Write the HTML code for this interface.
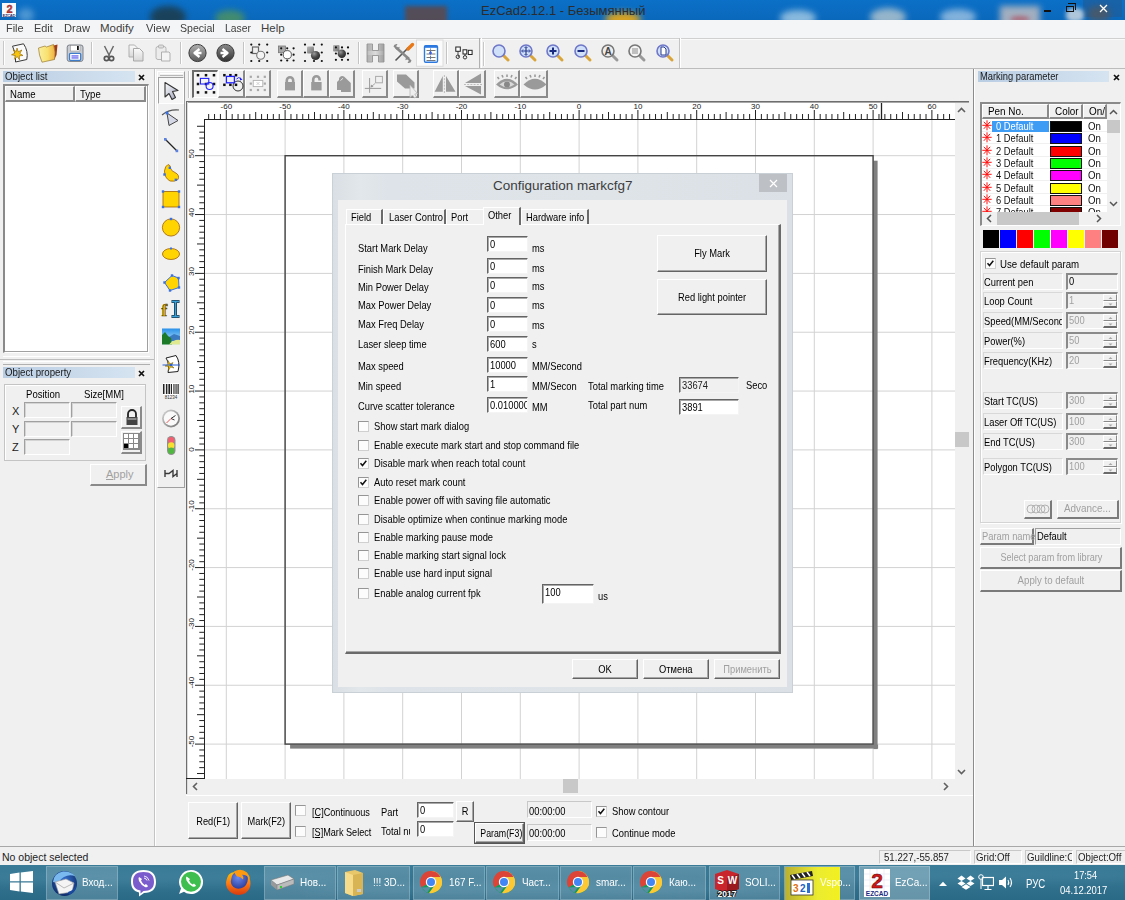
<!DOCTYPE html>
<html><head><meta charset="utf-8">
<style>
*{margin:0;padding:0;box-sizing:border-box}
html,body{width:1125px;height:900px;overflow:hidden;background:#f0f0f0;font-family:"Liberation Sans",sans-serif;font-size:11px;color:#000;position:relative}
.a{position:absolute}
.t{position:absolute;white-space:nowrap;line-height:1}
.cb{position:absolute;width:11px;height:11px;background:#fff;border:1px solid #8e8f8f;border-top-color:#6d6d6d;border-left-color:#6d6d6d}
.hdr{position:absolute;height:11px;background:linear-gradient(90deg,#b9cde3,#d6e4f1);font-size:11px;line-height:11px;color:#1a1a1a;padding-left:2px}
</style></head><body>
<div class="a" style="left:0;top:0;width:1125px;height:20px;background:linear-gradient(#0b70c7,#0a68bb);overflow:hidden">
<div class="a" style="left:150px;top:6px;width:36px;height:22px;border-radius:50%;background:#1d3b4a;filter:blur(3px);opacity:.85"></div>
<div class="a" style="left:215px;top:10px;width:30px;height:16px;border-radius:50%;background:#5a9a50;filter:blur(3px);opacity:.7"></div>
<div class="a" style="left:405px;top:6px;width:42px;height:20px;background:#5c4a4e;filter:blur(2px);opacity:.9"></div>
<div class="a" style="left:605px;top:12px;width:36px;height:14px;border-radius:50%;background:#d9a320;filter:blur(3px)"></div>
<div class="a" style="left:780px;top:10px;width:36px;height:16px;border-radius:50%;background:#a8cde6;filter:blur(3px);opacity:.8"></div>
<div class="a" style="left:870px;top:8px;width:36px;height:18px;border-radius:50%;background:#b8c8cf;filter:blur(3px);opacity:.8"></div>
<div class="a" style="left:940px;top:9px;width:36px;height:16px;border-radius:50%;background:#a0c4e4;filter:blur(3px);opacity:.8"></div>
<div class="a" style="left:1000px;top:6px;width:40px;height:20px;background:#c8c0c0;filter:blur(3px);opacity:.8"></div>
<div class="a" style="left:1083px;top:0;width:39px;height:17px;background:#1e5e9c;opacity:.75"></div>
<div class="a" style="left:1066px;top:8px;width:18px;height:14px;border-radius:40%;background:#d8dde2;filter:blur(2px);opacity:.8"></div>
<div class="a" style="left:1088px;top:6px;width:22px;height:16px;border-radius:40%;background:#505860;filter:blur(3px);opacity:.8"></div>
<div class="a" style="left:1010px;top:16px;width:20px;height:6px;border-radius:50%;background:#b04050;filter:blur(2px);opacity:.6"></div>
</div>
<div class="a" style="left:18px;top:8px;width:16px;height:14px;border-radius:50%;background:#7ab4e0;filter:blur(3px);opacity:.6"></div>
<svg class="a" style="left:2px;top:3px" width="14" height="14" viewBox="0 0 14 14"><rect width="14" height="14" fill="#f8f8fa"/><text x="7.5" y="9.5" font-size="11" font-weight="bold" text-anchor="middle" fill="#d83838" font-family="Liberation Sans" stroke="#602020" stroke-width=".3">2</text><rect x="0.5" y="10.2" width="13" height="3.4" fill="#fff"/><text x="7" y="13.6" font-size="4.2" font-weight="bold" text-anchor="middle" fill="#2a3070" font-family="Liberation Sans" textLength="13">EZCAD</text></svg>
<div class="t" style="left:481px;top:4px;font-size:13px;color:#2c2c2c">EzCad2.12.1 - Безымянный</div>
<div class="a" style="left:1044px;top:10px;width:7px;height:2px;background:#111"></div>
<div class="a" style="left:1066px;top:6px;width:8px;height:6px;border:1.5px solid #111"></div>
<div class="a" style="left:1068px;top:3px;width:8px;height:7px;border-top:1.5px solid #111;border-right:1.5px solid #111"></div>
<svg class="a" style="left:1099px;top:4px" width="9" height="9" viewBox="0 0 9 9"><path d="M1 1 L8 8 M8 1 L1 8" stroke="#fff" stroke-width="1.3"/></svg>
<div class="a" style="left:0;top:20px;width:1125px;height:19px;background:#f4f5f6;border-bottom:1px solid #d0d0d0"></div><div class="t" style="left:6px;top:23px;font-size:11.5px;color:#404040;transform:scaleX(0.95);transform-origin:0 0">File</div><div class="t" style="left:34px;top:23px;font-size:11.5px;color:#404040;transform:scaleX(0.95);transform-origin:0 0">Edit</div><div class="t" style="left:64px;top:23px;font-size:11.5px;color:#404040;transform:scaleX(0.97);transform-origin:0 0">Draw</div><div class="t" style="left:100px;top:23px;font-size:11.5px;color:#404040;transform:scaleX(1);transform-origin:0 0">Modify</div><div class="t" style="left:146px;top:23px;font-size:11.5px;color:#404040;transform:scaleX(0.97);transform-origin:0 0">View</div><div class="t" style="left:180px;top:23px;font-size:11.5px;color:#404040;transform:scaleX(0.92);transform-origin:0 0">Special</div><div class="t" style="left:225px;top:23px;font-size:11.5px;color:#404040;transform:scaleX(0.9);transform-origin:0 0">Laser</div><div class="t" style="left:261px;top:23px;font-size:11.5px;color:#404040;transform:scaleX(1);transform-origin:0 0">Help</div><div class="a" style="left:0;top:39px;width:1125px;height:30px;background:#f0f0f0;border-top:1px solid #fafafa;border-bottom:1px solid #bcbcbc"></div><div class="a" style="left:3px;top:41px;width:2px;height:24px;border-left:1px solid #c8c8c8;border-right:1px solid #fff"></div>
<div class="a" style="left:91px;top:42px;width:2px;height:22px;border-left:1px solid #c4c4c4;border-right:1px solid #fff"></div>
<div class="a" style="left:180px;top:42px;width:2px;height:22px;border-left:1px solid #c4c4c4;border-right:1px solid #fff"></div>
<div class="a" style="left:243px;top:42px;width:2px;height:22px;border-left:1px solid #c4c4c4;border-right:1px solid #fff"></div>
<div class="a" style="left:358px;top:42px;width:2px;height:22px;border-left:1px solid #c4c4c4;border-right:1px solid #fff"></div>
<div class="a" style="left:446px;top:42px;width:2px;height:22px;border-left:1px solid #c4c4c4;border-right:1px solid #fff"></div>
<div class="a" style="left:479px;top:38px;width:3px;height:30px;border-left:1px solid #b0b0b0;border-right:1px solid #fff"></div>
<div class="a" style="left:483px;top:42px;width:2px;height:24px;border-left:1px solid #c8c8c8;border-right:1px solid #fff"></div>
<div class="a" style="left:679px;top:38px;width:2px;height:30px;border-left:1px solid #c4c4c4;border-right:1px solid #fff"></div>
<svg class="a" style="left:9px;top:43px" width="20" height="20" viewBox="0 0 20 20">
<path d="M3.5 3.2 L14.5 0.8 Q19.5 8 17.8 16.5 L6.5 19 Q8 11 3.5 3.2Z" fill="#fafafa" stroke="#3a3a3a" stroke-width="1"/>
<path d="M8 5 L9.3 8.8 L12.8 7 L10.8 10.5 L14 12.5 L10.3 12.8 L10.5 16.8 L8.2 13.6 L5.5 16.3 L6.2 12.6 L2.5 11.8 L6 10 L4.2 6.8 L7.3 8.5Z" fill="#f6c40e" stroke="#8a6000" stroke-width=".6"/></svg>
<svg class="a" style="left:37px;top:43px" width="22" height="20" viewBox="0 0 22 20">
<defs><linearGradient id="fg" x1="0" x2="1"><stop offset="0" stop-color="#fbf0a0"/><stop offset=".55" stop-color="#f8e070"/><stop offset="1" stop-color="#f0b040"/></linearGradient></defs>
<path d="M15 3 L20.5 1.5 L19.5 12 L17 17Z" fill="#a33a16"/>
<path d="M1.5 5 L8 3 L9.5 4 L16.5 1.5 Q19 9 17.5 16.5 L5 19.2 Q1.8 12 1.5 5Z" fill="url(#fg)" stroke="#9a7a30" stroke-width=".7"/></svg>
<svg class="a" style="left:66px;top:44px" width="18" height="18" viewBox="0 0 18 18">
<rect x="1.2" y="1" width="15.8" height="16.4" rx="2.2" fill="#c9cdd3" stroke="#7a8088" stroke-width="1"/>
<rect x="4.5" y="1.5" width="9.5" height="5.5" fill="#fff" stroke="#888" stroke-width=".5"/><rect x="11" y="2" width="1.8" height="4" fill="#111"/>
<rect x="3.5" y="9.3" width="11.2" height="7" rx="1" fill="#fff" stroke="#3c7cc8" stroke-width="1.3"/><rect x="5.5" y="11.4" width="7" height="1.1" fill="#4a4aee"/><rect x="5.5" y="13.4" width="7" height="1.1" fill="#4a4aee"/></svg>
<svg class="a" style="left:100px;top:43px" width="18" height="20" viewBox="0 0 18 20">
<path d="M4.5 3 L9.5 13 M13.5 3 L8.5 13" stroke="#6a6a6a" stroke-width="1.5"/>
<circle cx="6.5" cy="15.5" r="2.2" fill="none" stroke="#555" stroke-width="1.7"/><circle cx="11.5" cy="15.5" r="2.2" fill="none" stroke="#555" stroke-width="1.7"/></svg>
<svg class="a" style="left:127px;top:43px" width="18" height="20" viewBox="0 0 18 20">
<defs><linearGradient id="cg" x1="0" y1="0" x2="0" y2="1"><stop offset="0" stop-color="#fafafa"/><stop offset="1" stop-color="#d8d8d8"/></linearGradient></defs>
<path d="M2 2 H7.5 L10 4.5 V14 H2Z" fill="url(#cg)" stroke="#a8a8a8" stroke-width=".9"/><path d="M6.5 5.5 H12.5 L16 9 V18 H6.5Z" fill="url(#cg)" stroke="#a0a0a0" stroke-width=".9"/></svg>
<svg class="a" style="left:154px;top:43px" width="18" height="20" viewBox="0 0 18 20">
<rect x="2" y="3.5" width="10" height="13" rx="2" fill="#ececec" stroke="#b0b0b0" stroke-width=".9"/><rect x="4.5" y="2" width="5" height="3" rx="1" fill="#ddd" stroke="#a8a8a8" stroke-width=".8"/><path d="M7.5 9 H15 L16 10 V18 H7.5Z" fill="#f4f4f4" stroke="#a8a8a8" stroke-width=".9"/></svg>
<svg class="a" style="left:187px;top:43px" width="20" height="20" viewBox="0 0 20 20">
<defs><linearGradient id="bg197" x1="0" y1="0" x2="0" y2="1"><stop offset="0" stop-color="#b0b0b0"/><stop offset="1" stop-color="#5a5a5a"/></linearGradient></defs>
<circle cx="10.5" cy="10" r="8.6" fill="url(#bg197)" stroke="#3a3a3a" stroke-width="1"/>
<path d="M12.5 6 L7.5 10 L12.5 14 M7.5 10 H14.5" fill="none" stroke="#fff" stroke-width="2.3" stroke-linejoin="round"/></svg>
<svg class="a" style="left:215px;top:43px" width="20" height="20" viewBox="0 0 20 20">
<defs><linearGradient id="bg225" x1="0" y1="0" x2="0" y2="1"><stop offset="0" stop-color="#8a8a8a"/><stop offset="1" stop-color="#333"/></linearGradient></defs>
<circle cx="10.5" cy="10" r="8.6" fill="url(#bg225)" stroke="#3a3a3a" stroke-width="1"/>
<path d="M7.5 6 L12.5 10 L7.5 14 M12.5 10 H5.5" fill="none" stroke="#fff" stroke-width="2.3" stroke-linejoin="round"/></svg>
<svg class="a" style="left:245px;top:40px" width="110" height="26" viewBox="245 40 110 26"><defs><radialGradient id="ball" cx=".35" cy=".3" r=".8"><stop offset="0" stop-color="#9a9a9a"/><stop offset=".5" stop-color="#4a4a4a"/><stop offset="1" stop-color="#222"/></radialGradient><linearGradient id="sq" x1="0" y1="0" x2="1" y2="1"><stop offset="0" stop-color="#b8b8b8"/><stop offset="1" stop-color="#707070"/></linearGradient></defs><rect x="252.5" y="47" width="6" height="6.5" fill="none" stroke="#666" stroke-width="1.2"/><circle cx="260.7" cy="55.3" r="4" fill="#f4f4f4" stroke="#777" stroke-width="1.1"/><circle cx="251.3" cy="44.6" r="1.1" fill="#111"/><circle cx="259.2" cy="44.6" r="1.1" fill="#111"/><circle cx="267.2" cy="44.6" r="1.1" fill="#111"/><circle cx="251.3" cy="52.5" r="1.1" fill="#111"/><circle cx="267.2" cy="52.5" r="1.1" fill="#111"/><circle cx="251.3" cy="61" r="1.1" fill="#111"/><circle cx="259.2" cy="61" r="1.1" fill="#111"/><circle cx="267.2" cy="61" r="1.1" fill="#111"/><rect x="278.5" y="46" width="7" height="6.7" fill="#a8a8a8" stroke="#777" stroke-width=".8"/><circle cx="287.3" cy="54.7" r="4.1" fill="#fff" stroke="#444" stroke-width=".9"/><circle cx="281.2" cy="48.3" r="1.1" fill="#111"/><circle cx="287.2" cy="48.3" r="1.1" fill="#111"/><circle cx="293.6" cy="48.3" r="1.1" fill="#111"/><circle cx="281.2" cy="54.7" r="1.1" fill="#111"/><circle cx="293.6" cy="54.7" r="1.1" fill="#111"/><circle cx="281.2" cy="60.5" r="1.1" fill="#111"/><circle cx="287.2" cy="60.5" r="1.1" fill="#111"/><circle cx="293.6" cy="60.5" r="1.1" fill="#111"/><rect x="307" y="46.5" width="7" height="7" rx="1" fill="url(#sq)"/><circle cx="315.5" cy="55.5" r="4.6" fill="url(#ball)"/><circle cx="305" cy="44.6" r="1.1" fill="#111"/><circle cx="314" cy="44.6" r="1.1" fill="#111"/><circle cx="321.8" cy="44.6" r="1.1" fill="#111"/><circle cx="305" cy="52.5" r="1.1" fill="#111"/><circle cx="321.8" cy="52.5" r="1.1" fill="#111"/><circle cx="305" cy="61" r="1.1" fill="#111"/><circle cx="314" cy="61" r="1.1" fill="#111"/><circle cx="321.8" cy="61" r="1.1" fill="#111"/><rect x="333" y="45" width="6.5" height="6.5" rx="1" fill="url(#sq)"/><circle cx="341.8" cy="53.8" r="4.2" fill="url(#ball)"/><circle cx="342" cy="47.4" r="1.1" fill="#111"/><circle cx="348" cy="47.4" r="1.1" fill="#111"/><circle cx="335.9" cy="53.5" r="1.1" fill="#111"/><circle cx="348" cy="53.5" r="1.1" fill="#111"/><circle cx="335.9" cy="59.8" r="1.1" fill="#111"/><circle cx="342" cy="59.8" r="1.1" fill="#111"/><circle cx="348" cy="59.8" r="1.1" fill="#111"/><circle cx="335.9" cy="47.4" r="1.1" fill="#111"/></svg>
<svg class="a" style="left:360px;top:38px" width="120" height="30" viewBox="360 38 120 30">
<defs><linearGradient id="hg" x1="0" x2="1"><stop offset="0" stop-color="#bdbdbd"/><stop offset=".5" stop-color="#dcdcdc"/><stop offset="1" stop-color="#a8a8a8"/></linearGradient></defs>
<path d="M367 44 H372.5 V50.5 H378.5 V44 H384 V62 H378.5 V55.5 H372.5 V62 H367Z" fill="url(#hg)" stroke="#8a8a8a" stroke-width=".8"/><path d="M367 46 H372.5 M378.5 46 H384" stroke="#8a8a8a" stroke-width=".5"/><path d="M367 48 H372.5 M378.5 48 H384" stroke="#8a8a8a" stroke-width=".5"/><path d="M367 50 H372.5 M378.5 50 H384" stroke="#8a8a8a" stroke-width=".5"/><path d="M367 56 H372.5 M378.5 56 H384" stroke="#8a8a8a" stroke-width=".5"/><path d="M367 58 H372.5 M378.5 58 H384" stroke="#8a8a8a" stroke-width=".5"/><path d="M367 60 H372.5 M378.5 60 H384" stroke="#8a8a8a" stroke-width=".5"/>
<path d="M395.5 60.5 L409 47" stroke="#555" stroke-width="1.6"/><path d="M408 49 L412.5 44.5" stroke="#e87818" stroke-width="3.4" stroke-linecap="round"/>
<path d="M396 47.5 L409 59" stroke="#888" stroke-width="2.6"/><path d="M393.5 46.5 Q394 43.5 397.5 44 L396.2 46.2 L397.5 47.8 L399.5 46.8 Q400 50 396.5 49.5Z" fill="#888"/><path d="M411.5 60.5 Q411 63.5 407.5 63 L408.8 60.8 L407.5 59.2 L405.5 60.2 Q405 57 408.5 57.5Z" fill="#888"/>
<rect x="416.5" y="40" width="26.5" height="26.3" fill="#fbfbfb" stroke="#dcdcdc" stroke-width="1"/>
<rect x="424.5" y="45.8" width="13" height="16.4" rx="1.2" fill="#fff" stroke="#2a78e0" stroke-width="1.4"/><rect x="424.5" y="45.8" width="13" height="2" fill="#2a78e0"/>
<path d="M426.5 50.5 H435.5 M426.5 54 H435.5 M426.5 57.5 H435.5 M426.5 60.5 H435.5" stroke="#555" stroke-width=".8"/>
<path d="M430.5 48.5 V61" stroke="#3a70e0" stroke-width="1" stroke-dasharray="1.2 1.2"/><circle cx="430.5" cy="53" r="1.4" fill="#3a60e0"/>
<rect x="455.8" y="47" width="4.5" height="4.3" fill="#fff" stroke="#222" stroke-width="1"/><rect x="463" y="49.8" width="3.8" height="4.2" fill="#fff" stroke="#222" stroke-width="1"/><rect x="468.3" y="50.3" width="3.8" height="4.2" fill="#fff" stroke="#222" stroke-width="1"/>
<circle cx="457.8" cy="56.8" r="1.7" fill="none" stroke="#222" stroke-width=".9"/><circle cx="465" cy="57.3" r="1.7" fill="none" stroke="#222" stroke-width=".9"/><path d="M458 51.3 V55 M465 54 V55.6 M457.8 56.8 L459.5 55.5" stroke="#222" stroke-width=".8"/></svg>
<svg class="a" style="left:491px;top:43px" width="20" height="20" viewBox="0 0 20 20">
<path d="M11 11 L17 17" stroke="#d9a53a" stroke-width="3" stroke-linecap="round"/>
<circle cx="8" cy="8" r="6" fill="#cfe0f8" stroke="#6f78c8" stroke-width="1.6"/></svg>
<svg class="a" style="left:518px;top:43px" width="20" height="20" viewBox="0 0 20 20">
<path d="M11 11 L17 17" stroke="#d9a53a" stroke-width="3" stroke-linecap="round"/>
<circle cx="8" cy="8" r="6" fill="#cfe0f8" stroke="#6f78c8" stroke-width="1.6"/><path d="M8 4 V12 M4 8 H12" stroke="#2a3a90" stroke-width="1.2"/><path d="M6.5 5 L8 3.5 L9.5 5 M6.5 11 L8 12.5 L9.5 11 M5 6.5 L3.5 8 L5 9.5 M11 6.5 L12.5 8 L11 9.5" fill="none" stroke="#2a3a90" stroke-width=".9"/></svg>
<svg class="a" style="left:545px;top:43px" width="20" height="20" viewBox="0 0 20 20">
<path d="M11 11 L17 17" stroke="#d9a53a" stroke-width="3" stroke-linecap="round"/>
<circle cx="8" cy="8" r="6" fill="#cfe0f8" stroke="#6f78c8" stroke-width="1.6"/><path d="M8 4.5 V11.5 M4.5 8 H11.5" stroke="#1a2a80" stroke-width="2"/></svg>
<svg class="a" style="left:573px;top:43px" width="20" height="20" viewBox="0 0 20 20">
<path d="M11 11 L17 17" stroke="#d9a53a" stroke-width="3" stroke-linecap="round"/>
<circle cx="8" cy="8" r="6" fill="#cfe0f8" stroke="#6f78c8" stroke-width="1.6"/><path d="M4.5 8 H11.5" stroke="#1a2a80" stroke-width="2"/></svg>
<svg class="a" style="left:600px;top:43px" width="20" height="20" viewBox="0 0 20 20">
<path d="M11 11 L17 17" stroke="#999" stroke-width="3" stroke-linecap="round"/>
<circle cx="8" cy="8" r="6" fill="#eee" stroke="#777" stroke-width="1.6"/><text x="8" y="11.5" font-size="10" font-weight="bold" text-anchor="middle" fill="#444" font-family="Liberation Sans">A</text></svg>
<svg class="a" style="left:627px;top:43px" width="20" height="20" viewBox="0 0 20 20">
<path d="M11 11 L17 17" stroke="#999" stroke-width="3" stroke-linecap="round"/>
<circle cx="8" cy="8" r="6" fill="#f4f4f4" stroke="#777" stroke-width="1.6"/><path d="M5 6 H11 M5 8 H11 M5 10 H11 M6 5 V11 M8 5 V11 M10 5 V11" stroke="#999" stroke-width=".7"/></svg>
<svg class="a" style="left:655px;top:43px" width="20" height="20" viewBox="0 0 20 20">
<path d="M11 11 L17 17" stroke="#d9a53a" stroke-width="3" stroke-linecap="round"/>
<circle cx="8" cy="8" r="6" fill="#cfe0f8" stroke="#6f78c8" stroke-width="1.6"/><path d="M6 4 H9 L11 6 V12 H6Z" fill="#fff" stroke="#2a3a90" stroke-width="1"/></svg><div class="hdr" style="left:3px;top:71px;width:132px"><span style="display:inline-block;transform:scaleX(.88);transform-origin:0 0">Object list</span></div>
<svg class="a" style="left:138px;top:74px" width="7" height="7" viewBox="0 0 7 7"><path d="M1 1 L6 6 M6 1 L1 6" stroke="#111" stroke-width="1.7"/></svg>
<div class="a" style="left:3px;top:84px;width:146px;height:269px;background:#fff;border-style:solid;border-width:2px 1px 1px 2px;border-color:#8a8a8a #fff #fff #8a8a8a;box-shadow:inset -1px -1px 0 #a0a0a0"></div>
<div class="a" style="left:5px;top:86px;width:70px;height:16px;background:#f0f0f0;border-style:solid;border-width:1px 2px 2px 1px;border-color:#fff #8a8a8a #8a8a8a #fff"></div>
<div class="a" style="left:75px;top:86px;width:71px;height:16px;background:#f0f0f0;border-style:solid;border-width:1px 2px 2px 1px;border-color:#fff #8a8a8a #8a8a8a #fff"></div>
<div class="t" style="left:10px;top:89px;font-size:11px;transform:scaleX(.87);transform-origin:0 0">Name</div>
<div class="t" style="left:80px;top:89px;font-size:11px;transform:scaleX(.87);transform-origin:0 0">Type</div>
<div class="a" style="left:3px;top:356px;width:147px;height:1px;background:#fff"></div><div class="a" style="left:0;top:359px;width:154px;height:1px;background:#bdbdbd"></div>
<div class="a" style="left:3px;top:361px;width:147px;height:1px;background:#fff"></div><div class="a" style="left:3px;top:364px;width:147px;height:1px;background:#b0b0b0"></div>
<div class="a" style="left:154px;top:69px;width:2px;height:777px;border-left:1px solid #c4c4c4;border-right:1px solid #fff"></div>
<div class="hdr" style="left:3px;top:367px;width:132px"><span style="display:inline-block;transform:scaleX(.88);transform-origin:0 0">Object property</span></div>
<svg class="a" style="left:138px;top:370px" width="7" height="7" viewBox="0 0 7 7"><path d="M1 1 L6 6 M6 1 L1 6" stroke="#111" stroke-width="1.7"/></svg>
<div class="a" style="left:4px;top:384px;width:142px;height:77px;border:1px solid #c4c4c4;box-shadow:1px 1px 0 #fff inset"></div>
<div class="t" style="left:26px;top:389px;font-size:11px;transform:scaleX(.87);transform-origin:0 0">Position</div>
<div class="t" style="left:84px;top:389px;font-size:11px;transform:scaleX(.87);transform-origin:0 0">Size[MM]</div>
<div class="t" style="left:12px;top:406px;font-size:11px;color:#222">X</div>
<div class="t" style="left:12px;top:424px;font-size:11px;color:#222">Y</div>
<div class="t" style="left:12px;top:442px;font-size:11px;color:#222">Z</div>
<div class="a" style="left:24px;top:402px;width:46px;height:16px;background:#f0f0f0;border-style:solid;border-width:1px;border-color:#a0a0a0 #fff #fff #a0a0a0;box-shadow:inset 1px 1px 0 #d4d4d4"></div>
<div class="a" style="left:24px;top:421px;width:46px;height:16px;background:#f0f0f0;border-style:solid;border-width:1px;border-color:#a0a0a0 #fff #fff #a0a0a0;box-shadow:inset 1px 1px 0 #d4d4d4"></div>
<div class="a" style="left:24px;top:439px;width:46px;height:16px;background:#f0f0f0;border-style:solid;border-width:1px;border-color:#a0a0a0 #fff #fff #a0a0a0;box-shadow:inset 1px 1px 0 #d4d4d4"></div>
<div class="a" style="left:71px;top:402px;width:46px;height:16px;background:#f0f0f0;border-style:solid;border-width:1px;border-color:#a0a0a0 #fff #fff #a0a0a0;box-shadow:inset 1px 1px 0 #d4d4d4"></div>
<div class="a" style="left:71px;top:421px;width:46px;height:16px;background:#f0f0f0;border-style:solid;border-width:1px;border-color:#a0a0a0 #fff #fff #a0a0a0;box-shadow:inset 1px 1px 0 #d4d4d4"></div>
<div class="a" style="left:121px;top:406px;width:21px;height:23px;background:#f0f0f0;border-style:solid;border-width:1px 2px 2px 1px;border-color:#fff #8a8a8a #8a8a8a #fff;"></div>
<svg class="a" style="left:124px;top:409px" width="16" height="17" viewBox="0 0 16 17"><path d="M4 8 V5 A4 4 0 0 1 12 5 V8" fill="none" stroke="#222" stroke-width="1.8"/><rect x="2.5" y="8" width="11" height="8" fill="#444"/><rect x="3.5" y="9" width="9" height="2" fill="#888"/></svg>
<div class="a" style="left:121px;top:431px;width:21px;height:23px;background:#f0f0f0;border-style:solid;border-width:1px 2px 2px 1px;border-color:#fff #8a8a8a #8a8a8a #fff;"></div>
<svg class="a" style="left:123px;top:433px" width="17" height="17" viewBox="0 0 17 17"><rect x="0" y="0" width="17" height="17" fill="#888"/><rect x="1" y="1" width="4" height="4" fill="#fff"/><rect x="1" y="6" width="4" height="4" fill="#fff"/><rect x="1" y="11" width="4" height="4" fill="#000"/><rect x="6" y="1" width="4" height="4" fill="#fff"/><rect x="6" y="6" width="4" height="4" fill="#fff"/><rect x="6" y="11" width="4" height="4" fill="#fff"/><rect x="11" y="1" width="4" height="4" fill="#fff"/><rect x="11" y="6" width="4" height="4" fill="#fff"/><rect x="11" y="11" width="4" height="4" fill="#fff"/></svg>
<div class="a" style="left:90px;top:464px;width:57px;height:22px;background:#f0f0f0;border-style:solid;border-width:1px 2px 2px 1px;border-color:#fff #8a8a8a #8a8a8a #fff;"></div>
<div class="t" style="left:106px;top:469px;font-size:11px;color:#a0a0a0"><u>A</u>pply</div>
<div class="a" style="left:157px;top:71px;width:28px;height:417px;border-style:solid;border-width:1px;border-color:#fff #a0a0a0 #a0a0a0 #fff"></div>
<div class="a" style="left:160px;top:73px;width:23px;height:3px;border-top:1px solid #fff;border-bottom:1px solid #b8b8b8"></div>
<div class="a" style="left:158px;top:77px;width:26px;height:27px;background:#f6f6f6;border-style:solid;border-width:1px;border-color:#a0a0a0 #fff #fff #a0a0a0"></div>
<svg class="a" style="left:161px;top:80px" width="20" height="20" viewBox="0 0 20 20"><defs><linearGradient id="ag" x1="0" y1="0" x2="1" y2="1"><stop offset="0" stop-color="#fff"/><stop offset="1" stop-color="#9aa0b8"/></linearGradient></defs><path d="M4 2.5 L17 10.5 L11.5 11.5 L14.5 17.5 L11 19.5 L8 13.5 L4 17Z" fill="url(#ag)" stroke="#333" stroke-width="1.1" stroke-linejoin="round"/></svg>
<svg class="a" style="left:161px;top:108px" width="20" height="20" viewBox="0 0 20 20"><path d="M1 7 Q8 1 18 2" fill="none" stroke="#555" stroke-width="1.1"/><path d="M6 5 L17 12.5 L8 17.5Z" fill="#d4d8e6" stroke="#444" stroke-width="1"/><rect x="4.6" y="3.6" width="2.8" height="2.8" fill="#3a70e0"/></svg>
<svg class="a" style="left:161px;top:135px" width="20" height="20" viewBox="0 0 20 20"><path d="M4.5 4.5 L15.5 15.5" stroke="#222" stroke-width="1.2"/><rect x="3" y="3" width="2.6" height="2.6" fill="#5a80e0"/><rect x="14.6" y="14.6" width="2.6" height="2.6" fill="#5a80e0"/></svg>
<svg class="a" style="left:161px;top:162px" width="20" height="20" viewBox="0 0 20 20"><path d="M7 2.5 Q4 4 3.5 9 Q3.5 16 9 19 Q14 20 17 17.5 Q19 13 14 10.5 Q10 9 9.5 6 Q9.5 3 7 2.5Z" fill="#ffd400" stroke="#a06000" stroke-width=".8"/><rect x="7.6" y="4.6" width="2.4" height="2.4" fill="#3a70e0"/><rect x="2.3" y="11.3" width="2.4" height="2.4" fill="#3a70e0"/><rect x="13.6" y="16.6" width="2.4" height="2.4" fill="#3a70e0"/></svg>
<svg class="a" style="left:161px;top:189px" width="20" height="20" viewBox="0 0 20 20"><rect x="2" y="2.5" width="16" height="15.5" fill="#ffd400" stroke="#a06000" stroke-width=".8"/><rect x=".8" y="1.3" width="2.4" height="2.4" fill="#3a70e0"/><rect x="16.8" y="1.3" width="2.4" height="2.4" fill="#3a70e0"/><rect x=".8" y="16.8" width="2.4" height="2.4" fill="#3a70e0"/><rect x="16.8" y="16.8" width="2.4" height="2.4" fill="#3a70e0"/></svg>
<svg class="a" style="left:161px;top:217px" width="20" height="20" viewBox="0 0 20 20"><circle cx="10" cy="10.5" r="8.6" fill="#ffd400" stroke="#a06000" stroke-width=".8"/><rect x="8.8" y=".8" width="2.4" height="2.4" fill="#3a70e0"/></svg>
<svg class="a" style="left:161px;top:244px" width="20" height="20" viewBox="0 0 20 20"><ellipse cx="10" cy="10" rx="8.5" ry="5.5" fill="#ffd400" stroke="#a06000" stroke-width=".8"/><rect x="9" y="3.5" width="2" height="2" fill="#3a70e0"/></svg>
<svg class="a" style="left:161px;top:272px" width="20" height="20" viewBox="0 0 20 20"><path d="M3.5 10.5 L11 3.5 L17.5 6 L18 15.5 L9 18.5Z" fill="#ffd400" stroke="#3a70e0" stroke-width="1"/><g fill="#3a70e0"><rect x="2.3" y="9.3" width="2.4" height="2.4"/><rect x="9.8" y="2.3" width="2.4" height="2.4"/><rect x="16.3" y="4.8" width="2.4" height="2.4"/><rect x="16.8" y="14.3" width="2.4" height="2.4"/><rect x="7.8" y="17.3" width="2.4" height="2.4"/></g></svg>
<svg class="a" style="left:161px;top:299px" width="20" height="20" viewBox="0 0 20 20"><text x="0.5" y="17" font-size="17" font-weight="bold" fill="#f0c000" font-family="Liberation Serif" stroke="#504000" stroke-width=".7">f</text><path d="M10.5 2.5 H18.5 M14.5 2.5 V17.5 M10.5 17.5 H18.5" stroke="#1a3a50" stroke-width="3"/><path d="M11 2.5 H18 M14.5 3 V17 M11 17.5 H18" stroke="#3aa0d8" stroke-width="1.4"/></svg>
<svg class="a" style="left:161px;top:326px" width="20" height="20" viewBox="0 0 20 20"><defs><linearGradient id="sky" x1="0" y1="0" x2="0" y2="1"><stop offset="0" stop-color="#2a90e8"/><stop offset="1" stop-color="#c8f0ff"/></linearGradient></defs><rect x="1" y="2.5" width="18" height="16" fill="url(#sky)"/><path d="M8 11 L13 8 L19 10 V15 H8Z" fill="#3a7ac0"/><path d="M1 9 L4 6 L7 10 L10 12 L11 18.5 H1Z" fill="#1a7a28"/><path d="M8 18.5 Q13 13 19 14 V18.5Z" fill="#e0e890"/></svg>
<svg class="a" style="left:161px;top:354px" width="20" height="20" viewBox="0 0 20 20"><path d="M5 4 L15 1.5 Q19.5 8 17 17.5 L7 18.5 Q9 10 5 4Z" fill="#fff" stroke="#222" stroke-width="1"/><path d="M7 6.5 L9 10 L12 8.5 L10.5 11.5 L13 14 L9.5 13 L7.5 16.5 L7.5 12.5 L4 12 L7 10.5Z" fill="#f0c000" stroke="#705000" stroke-width=".5"/><path d="M1.5 11 H19" stroke="#2a60d0" stroke-width="1"/><rect x="8.8" y="9.8" width="2.4" height="2.4" fill="#2a60d0"/></svg>
<svg class="a" style="left:161px;top:381px" width="20" height="20" viewBox="0 0 20 20"><rect x="2" y="2" width="16" height="12" fill="#fff"/><rect x="2" y="3" width="1" height="10" fill="#222"/><rect x="3.5" y="3" width="0.6" height="10" fill="#222"/><rect x="5" y="3" width="1.4" height="10" fill="#222"/><rect x="7" y="3" width="0.6" height="10" fill="#222"/><rect x="8" y="3" width="1.2" height="10" fill="#222"/><rect x="10" y="3" width="1" height="10" fill="#222"/><rect x="12" y="3" width="0.6" height="10" fill="#222"/><rect x="13.5" y="3" width="1" height="10" fill="#222"/><rect x="15" y="3" width="0.6" height="10" fill="#222"/><rect x="16.5" y="3" width="1.2" height="10" fill="#222"/><text x="10" y="18" font-size="4.5" text-anchor="middle" fill="#333" font-family="Liberation Sans">81234</text></svg>
<svg class="a" style="left:161px;top:408px" width="20" height="20" viewBox="0 0 20 20"><defs><linearGradient id="clk" x1="0" y1="0" x2="1" y2="1"><stop offset="0" stop-color="#d8d8d8"/><stop offset="1" stop-color="#707070"/></linearGradient></defs><circle cx="10" cy="10.5" r="9" fill="url(#clk)"/><circle cx="10" cy="10.5" r="7.2" fill="#fafafa"/><path d="M10 10.5 L14.5 7.5 M10 10.5 L13.5 12" stroke="#333" stroke-width="1"/><path d="M10 10.5 L5.5 15" stroke="#e03030" stroke-width=".8"/></svg>
<svg class="a" style="left:161px;top:435px" width="20" height="20" viewBox="0 0 20 20"><rect x="6" y="1" width="8.5" height="19" rx="4.2" fill="#909090"/><circle cx="10.2" cy="5.3" r="3.2" fill="#f06070"/><circle cx="10.2" cy="10.5" r="3.2" fill="#f8e030"/><circle cx="10.2" cy="15.7" r="3.2" fill="#50b840"/></svg>
<svg class="a" style="left:161px;top:463px" width="20" height="20" viewBox="0 0 20 20"><path d="M4 7 V14 M4 10.5 H8 L12 7.5 V13.5 L16 10.5 M16 7 V14" fill="none" stroke="#3a3a3a" stroke-width="1.4"/></svg>
<div class="a" style="left:188px;top:71px;width:2px;height:27px;border-left:1px solid #c4c4c4;border-right:1px solid #fff"></div>
<div class="a" style="left:192px;top:70px;width:26px;height:28px;background:#f4f4f4;border-style:solid;border-width:2px 1px 1px 2px;border-color:#6a6a6a #fff #fff #6a6a6a;"></div>
<div class="a" style="left:218px;top:70px;width:27px;height:28px;background:#f0f0f0;border-style:solid;border-width:1px 2px 2px 1px;border-color:#fff #8a8a8a #8a8a8a #fff;"></div>
<div class="a" style="left:245px;top:70px;width:26px;height:28px;background:#f0f0f0;border-style:solid;border-width:1px 2px 2px 1px;border-color:#fff #8a8a8a #8a8a8a #fff;"></div>
<div class="a" style="left:277px;top:70px;width:26px;height:28px;background:#f0f0f0;border-style:solid;border-width:1px 2px 2px 1px;border-color:#fff #8a8a8a #8a8a8a #fff;"></div>
<div class="a" style="left:303px;top:70px;width:26px;height:28px;background:#f0f0f0;border-style:solid;border-width:1px 2px 2px 1px;border-color:#fff #8a8a8a #8a8a8a #fff;"></div>
<div class="a" style="left:329px;top:70px;width:26px;height:28px;background:#f0f0f0;border-style:solid;border-width:1px 2px 2px 1px;border-color:#fff #8a8a8a #8a8a8a #fff;"></div>
<div class="a" style="left:362px;top:70px;width:26px;height:28px;background:#f0f0f0;border-style:solid;border-width:1px 2px 2px 1px;border-color:#fff #8a8a8a #8a8a8a #fff;"></div>
<div class="a" style="left:393px;top:70px;width:26px;height:28px;background:#f0f0f0;border-style:solid;border-width:1px 2px 2px 1px;border-color:#fff #8a8a8a #8a8a8a #fff;"></div>
<div class="a" style="left:433px;top:70px;width:26px;height:28px;background:#f0f0f0;border-style:solid;border-width:1px 2px 2px 1px;border-color:#fff #8a8a8a #8a8a8a #fff;"></div>
<div class="a" style="left:459px;top:70px;width:27px;height:28px;background:#f0f0f0;border-style:solid;border-width:1px 2px 2px 1px;border-color:#fff #8a8a8a #8a8a8a #fff;"></div>
<div class="a" style="left:494px;top:70px;width:26px;height:28px;background:#f0f0f0;border-style:solid;border-width:1px 2px 2px 1px;border-color:#fff #8a8a8a #8a8a8a #fff;"></div>
<div class="a" style="left:520px;top:70px;width:28px;height:28px;background:#f0f0f0;border-style:solid;border-width:1px 2px 2px 1px;border-color:#fff #8a8a8a #8a8a8a #fff;"></div>
<svg class="a" style="left:186px;top:68px" width="366" height="32" viewBox="186 68 366 32"><rect x="196.75" y="73.95" width="2.5" height="2.5" fill="#111"/><rect x="196.75" y="82.75" width="2.5" height="2.5" fill="#111"/><rect x="196.75" y="91.15" width="2.5" height="2.5" fill="#111"/><rect x="204.75" y="73.95" width="2.5" height="2.5" fill="#111"/><rect x="204.75" y="82.75" width="2.5" height="2.5" fill="#111"/><rect x="204.75" y="91.15" width="2.5" height="2.5" fill="#111"/><rect x="212.75" y="73.95" width="2.5" height="2.5" fill="#111"/><rect x="212.75" y="82.75" width="2.5" height="2.5" fill="#111"/><rect x="212.75" y="91.15" width="2.5" height="2.5" fill="#111"/><rect x="200.4" y="78.4" width="8.4" height="5.6" fill="none" stroke="#2020ff" stroke-width="1.1"/><circle cx="209.6" cy="86" r="3.5" fill="none" stroke="#2020ff" stroke-width="1.1"/><rect x="223.15" y="73.95" width="2.5" height="2.5" fill="#111"/><rect x="229.15" y="73.95" width="2.5" height="2.5" fill="#111"/><rect x="234.75" y="73.95" width="2.5" height="2.5" fill="#111"/><rect x="223.15" y="83.55" width="2.5" height="2.5" fill="#111"/><rect x="229.15" y="83.55" width="2.5" height="2.5" fill="#111"/><rect x="234.75" y="83.55" width="2.5" height="2.5" fill="#111"/><circle cx="238" cy="86" r="5" fill="none" stroke="#333" stroke-width="1"/><rect x="226.4" y="76.4" width="8" height="6.4" fill="#f0f0f0" stroke="#2020ff" stroke-width="1.3"/><path d="M236.5 79 Q238.5 76.5 241 78.5" fill="none" stroke="#2020ff" stroke-width="1"/><path d="M240 77.5 L242.5 79.5 L240 80.5Z" fill="#2020ff"/><rect x="249.70000000000002" y="75.7" width="2.2" height="2.2" fill="#a8a8a8"/><rect x="249.70000000000002" y="82.5" width="2.2" height="2.2" fill="#a8a8a8"/><rect x="249.70000000000002" y="88.9" width="2.2" height="2.2" fill="#a8a8a8"/><rect x="256.9" y="75.7" width="2.2" height="2.2" fill="#a8a8a8"/><rect x="256.9" y="88.9" width="2.2" height="2.2" fill="#a8a8a8"/><rect x="263.7" y="75.7" width="2.2" height="2.2" fill="#a8a8a8"/><rect x="263.7" y="82.5" width="2.2" height="2.2" fill="#a8a8a8"/><rect x="263.7" y="88.9" width="2.2" height="2.2" fill="#a8a8a8"/><rect x="253.2" y="80.4" width="9.6" height="6.2" fill="#fff" stroke="#b0b0b0" stroke-width=".9"/><path d="M256.5 82 L259.5 85 M259.5 82 L256.5 85" stroke="#c0c0c0" stroke-width=".7"/><rect x="285" y="82" width="10" height="8.4" fill="#9a9a9a"/><path d="M286.8 82.5 V80.5 A3.2 3.2 0 0 1 293.2 80.5 V82.5" fill="none" stroke="#9a9a9a" stroke-width="2.6"/><rect x="311.2" y="82" width="10.4" height="8.4" fill="#9a9a9a"/><path d="M313.2 82.5 V79.5 A3.2 3.2 0 0 1 319.6 79.5 V80.5" fill="none" stroke="#9a9a9a" stroke-width="2.6"/><path d="M337 82 L339 80 V78.5 A3.2 3.2 0 0 1 344 76.5 L350.8 83 V92 H341 V90 H337Z" fill="#9a9a9a"/><path d="M340.5 80.5 L343 78.3" stroke="#f0f0f0" stroke-width=".9"/><path d="M369.6 78 V92.8 M364.8 88.4 H381.2" stroke="#9a9a9a" stroke-width="1"/><rect x="375.6" y="76.4" width="6.8" height="6.4" fill="none" stroke="#aaa" stroke-width="1"/><path d="M375 83.5 L371.5 86.5" stroke="#aaa" stroke-width="1"/><path d="M370.5 87.5 L371 84.5 L373.5 86.8Z" fill="#999"/><path d="M397 74.5 H406 L414.5 82.5 V88.5 H405 L397 81.5Z" fill="#9a9a9a"/><path d="M410 85 V97.5 L412.5 95 L414.5 98 L416.5 97 L414.8 94 L417.5 93.5Z" fill="#eee" stroke="#b8b8b8" stroke-width=".8"/><path d="M434.6 91.8 L442.8 76 V91.8Z M446 76 L455.5 91.8 H446Z" fill="#9a9a9a"/><path d="M444.4 75 V94" stroke="#bdbdbd" stroke-width="1" stroke-dasharray="2 1.2"/><path d="M465 83 L481 73.5 V83Z M465 86 H481 V94.5Z" fill="#9a9a9a"/><path d="M464 84.5 H482" stroke="#bdbdbd" stroke-width="1" stroke-dasharray="2 1.2"/><path d="M496 84.5 Q507 73 518 84.5 Q507 94 496 84.5Z" fill="#9a9a9a"/><path d="M499 79 L497.5 77" stroke="#9a9a9a" stroke-width="1.6"/><path d="M503 77.5 L502 75" stroke="#9a9a9a" stroke-width="1.6"/><path d="M507 77 L507 74.5" stroke="#9a9a9a" stroke-width="1.6"/><path d="M511 77.5 L512 75" stroke="#9a9a9a" stroke-width="1.6"/><path d="M515 79 L516.5 77" stroke="#9a9a9a" stroke-width="1.6"/><path d="M499.5 84.5 Q507 78 514.5 84.5 Q507 90 499.5 84.5Z" fill="#d8d8d8"/><circle cx="507" cy="84.5" r="3" fill="#888"/><path d="M523.5 84.5 Q535 73 546.5 84.5 Q535 94.5 523.5 84.5Z" fill="#9a9a9a"/><path d="M527 79 L525.5 77" stroke="#9a9a9a" stroke-width="1.6"/><path d="M531 77.5 L530 75" stroke="#9a9a9a" stroke-width="1.6"/><path d="M535 77 L535 74.5" stroke="#9a9a9a" stroke-width="1.6"/><path d="M539 77.5 L540 75" stroke="#9a9a9a" stroke-width="1.6"/><path d="M543 79 L544.5 77" stroke="#9a9a9a" stroke-width="1.6"/></svg><svg class="a" style="left:186px;top:100px" width="784" height="694" viewBox="186 100 784 694">
<rect x="186" y="100" width="784" height="694" fill="#f0f0f0"/>
<rect x="188" y="103" width="767" height="676" fill="#fff"/>
<rect x="186" y="101" width="783" height="2" fill="#a8a8a8"/>
<rect x="186" y="101" width="2" height="693" fill="#dcdcdc"/>
<rect x="186" y="101" width="783" height="1" fill="#6e6e6e"/>
<rect x="186" y="101" width="1" height="693" fill="#6e6e6e"/>
<path d="M226.30 119.5 V779 M285.10 119.5 V779 M343.90 119.5 V779 M402.70 119.5 V779 M461.50 119.5 V779 M520.30 119.5 V779 M579.10 119.5 V779 M637.90 119.5 V779 M696.70 119.5 V779 M755.50 119.5 V779 M814.30 119.5 V779 M873.10 119.5 V779 M931.90 119.5 V779 M205 744.10 H955 M205 685.26 H955 M205 626.42 H955 M205 567.58 H955 M205 508.74 H955 M205 449.90 H955 M205 391.06 H955 M205 332.22 H955 M205 273.38 H955 M205 214.54 H955 M205 155.70 H955" stroke="#d2d2d2" stroke-width="1" fill="none"/>
<path d="M204 119.5 H955 M204.5 119 V779 M208.66 114 V119 M214.54 114 V119 M220.42 114 V119 M226.30 110 V119 M232.18 114 V119 M238.06 114 V119 M243.94 114 V119 M249.82 114 V119 M255.70 112 V119 M261.58 114 V119 M267.46 114 V119 M273.34 114 V119 M279.22 114 V119 M285.10 110 V119 M290.98 114 V119 M296.86 114 V119 M302.74 114 V119 M308.62 114 V119 M314.50 112 V119 M320.38 114 V119 M326.26 114 V119 M332.14 114 V119 M338.02 114 V119 M343.90 110 V119 M349.78 114 V119 M355.66 114 V119 M361.54 114 V119 M367.42 114 V119 M373.30 112 V119 M379.18 114 V119 M385.06 114 V119 M390.94 114 V119 M396.82 114 V119 M402.70 110 V119 M408.58 114 V119 M414.46 114 V119 M420.34 114 V119 M426.22 114 V119 M432.10 112 V119 M437.98 114 V119 M443.86 114 V119 M449.74 114 V119 M455.62 114 V119 M461.50 110 V119 M467.38 114 V119 M473.26 114 V119 M479.14 114 V119 M485.02 114 V119 M490.90 112 V119 M496.78 114 V119 M502.66 114 V119 M508.54 114 V119 M514.42 114 V119 M520.30 110 V119 M526.18 114 V119 M532.06 114 V119 M537.94 114 V119 M543.82 114 V119 M549.70 112 V119 M555.58 114 V119 M561.46 114 V119 M567.34 114 V119 M573.22 114 V119 M579.10 110 V119 M584.98 114 V119 M590.86 114 V119 M596.74 114 V119 M602.62 114 V119 M608.50 112 V119 M614.38 114 V119 M620.26 114 V119 M626.14 114 V119 M632.02 114 V119 M637.90 110 V119 M643.78 114 V119 M649.66 114 V119 M655.54 114 V119 M661.42 114 V119 M667.30 112 V119 M673.18 114 V119 M679.06 114 V119 M684.94 114 V119 M690.82 114 V119 M696.70 110 V119 M702.58 114 V119 M708.46 114 V119 M714.34 114 V119 M720.22 114 V119 M726.10 112 V119 M731.98 114 V119 M737.86 114 V119 M743.74 114 V119 M749.62 114 V119 M755.50 110 V119 M761.38 114 V119 M767.26 114 V119 M773.14 114 V119 M779.02 114 V119 M784.90 112 V119 M790.78 114 V119 M796.66 114 V119 M802.54 114 V119 M808.42 114 V119 M814.30 110 V119 M820.18 114 V119 M826.06 114 V119 M831.94 114 V119 M837.82 114 V119 M843.70 112 V119 M849.58 114 V119 M855.46 114 V119 M861.34 114 V119 M867.22 114 V119 M873.10 110 V119 M878.98 114 V119 M884.86 114 V119 M890.74 114 V119 M896.62 114 V119 M902.50 112 V119 M908.38 114 V119 M914.26 114 V119 M920.14 114 V119 M926.02 114 V119 M931.90 110 V119 M937.78 114 V119 M943.66 114 V119 M949.54 114 V119 M197 773.52 H204 M199.3 767.64 H204 M199.3 761.75 H204 M199.3 755.87 H204 M199.3 749.98 H204 M195 744.10 H204 M199.3 738.22 H204 M199.3 732.33 H204 M199.3 726.45 H204 M199.3 720.56 H204 M197 714.68 H204 M199.3 708.80 H204 M199.3 702.91 H204 M199.3 697.03 H204 M199.3 691.14 H204 M195 685.26 H204 M199.3 679.38 H204 M199.3 673.49 H204 M199.3 667.61 H204 M199.3 661.72 H204 M197 655.84 H204 M199.3 649.96 H204 M199.3 644.07 H204 M199.3 638.19 H204 M199.3 632.30 H204 M195 626.42 H204 M199.3 620.54 H204 M199.3 614.65 H204 M199.3 608.77 H204 M199.3 602.88 H204 M197 597.00 H204 M199.3 591.12 H204 M199.3 585.23 H204 M199.3 579.35 H204 M199.3 573.46 H204 M195 567.58 H204 M199.3 561.70 H204 M199.3 555.81 H204 M199.3 549.93 H204 M199.3 544.04 H204 M197 538.16 H204 M199.3 532.28 H204 M199.3 526.39 H204 M199.3 520.51 H204 M199.3 514.62 H204 M195 508.74 H204 M199.3 502.86 H204 M199.3 496.97 H204 M199.3 491.09 H204 M199.3 485.20 H204 M197 479.32 H204 M199.3 473.44 H204 M199.3 467.55 H204 M199.3 461.67 H204 M199.3 455.78 H204 M195 449.90 H204 M199.3 444.02 H204 M199.3 438.13 H204 M199.3 432.25 H204 M199.3 426.36 H204 M197 420.48 H204 M199.3 414.60 H204 M199.3 408.71 H204 M199.3 402.83 H204 M199.3 396.94 H204 M195 391.06 H204 M199.3 385.18 H204 M199.3 379.29 H204 M199.3 373.41 H204 M199.3 367.52 H204 M197 361.64 H204 M199.3 355.76 H204 M199.3 349.87 H204 M199.3 343.99 H204 M199.3 338.10 H204 M195 332.22 H204 M199.3 326.34 H204 M199.3 320.45 H204 M199.3 314.57 H204 M199.3 308.68 H204 M197 302.80 H204 M199.3 296.92 H204 M199.3 291.03 H204 M199.3 285.15 H204 M199.3 279.26 H204 M195 273.38 H204 M199.3 267.50 H204 M199.3 261.61 H204 M199.3 255.73 H204 M199.3 249.84 H204 M197 243.96 H204 M199.3 238.08 H204 M199.3 232.19 H204 M199.3 226.31 H204 M199.3 220.42 H204 M195 214.54 H204 M199.3 208.66 H204 M199.3 202.77 H204 M199.3 196.89 H204 M199.3 191.00 H204 M197 185.12 H204 M199.3 179.24 H204 M199.3 173.35 H204 M199.3 167.47 H204 M199.3 161.58 H204 M195 155.70 H204 M199.3 149.82 H204 M199.3 143.93 H204 M199.3 138.05 H204 M199.3 132.16 H204 M197 126.28 H204 M186 778.5 H204" stroke="#222" stroke-width="1" fill="none"/>
<text x="226.30" y="109" font-size="8" text-anchor="middle" fill="#1a1a1a" font-family="Liberation Sans">-60</text>
<text x="285.10" y="109" font-size="8" text-anchor="middle" fill="#1a1a1a" font-family="Liberation Sans">-50</text>
<text x="343.90" y="109" font-size="8" text-anchor="middle" fill="#1a1a1a" font-family="Liberation Sans">-40</text>
<text x="402.70" y="109" font-size="8" text-anchor="middle" fill="#1a1a1a" font-family="Liberation Sans">-30</text>
<text x="461.50" y="109" font-size="8" text-anchor="middle" fill="#1a1a1a" font-family="Liberation Sans">-20</text>
<text x="520.30" y="109" font-size="8" text-anchor="middle" fill="#1a1a1a" font-family="Liberation Sans">-10</text>
<text x="579.10" y="109" font-size="8" text-anchor="middle" fill="#1a1a1a" font-family="Liberation Sans">0</text>
<text x="637.90" y="109" font-size="8" text-anchor="middle" fill="#1a1a1a" font-family="Liberation Sans">10</text>
<text x="696.70" y="109" font-size="8" text-anchor="middle" fill="#1a1a1a" font-family="Liberation Sans">20</text>
<text x="755.50" y="109" font-size="8" text-anchor="middle" fill="#1a1a1a" font-family="Liberation Sans">30</text>
<text x="814.30" y="109" font-size="8" text-anchor="middle" fill="#1a1a1a" font-family="Liberation Sans">40</text>
<text x="873.10" y="109" font-size="8" text-anchor="middle" fill="#1a1a1a" font-family="Liberation Sans">50</text>
<text x="931.90" y="109" font-size="8" text-anchor="middle" fill="#1a1a1a" font-family="Liberation Sans">60</text>
<text transform="translate(194,747.30) rotate(-90)" font-size="8" text-anchor="start" fill="#1a1a1a" font-family="Liberation Sans">-50</text>
<text transform="translate(194,688.46) rotate(-90)" font-size="8" text-anchor="start" fill="#1a1a1a" font-family="Liberation Sans">-40</text>
<text transform="translate(194,629.62) rotate(-90)" font-size="8" text-anchor="start" fill="#1a1a1a" font-family="Liberation Sans">-30</text>
<text transform="translate(194,570.78) rotate(-90)" font-size="8" text-anchor="start" fill="#1a1a1a" font-family="Liberation Sans">-20</text>
<text transform="translate(194,511.94) rotate(-90)" font-size="8" text-anchor="start" fill="#1a1a1a" font-family="Liberation Sans">-10</text>
<text transform="translate(194,451.77) rotate(-90)" font-size="8" text-anchor="start" fill="#1a1a1a" font-family="Liberation Sans">0</text>
<text transform="translate(194,393.59) rotate(-90)" font-size="8" text-anchor="start" fill="#1a1a1a" font-family="Liberation Sans">10</text>
<text transform="translate(194,334.75) rotate(-90)" font-size="8" text-anchor="start" fill="#1a1a1a" font-family="Liberation Sans">20</text>
<text transform="translate(194,275.92) rotate(-90)" font-size="8" text-anchor="start" fill="#1a1a1a" font-family="Liberation Sans">30</text>
<text transform="translate(194,217.07) rotate(-90)" font-size="8" text-anchor="start" fill="#1a1a1a" font-family="Liberation Sans">40</text>
<text transform="translate(194,158.23) rotate(-90)" font-size="8" text-anchor="start" fill="#1a1a1a" font-family="Liberation Sans">50</text>
<path d="M881.5 103 V119" stroke="#222" stroke-width="1.3"/>
<rect x="873.60" y="160.70" width="4" height="588.40" fill="#808080"/>
<rect x="290.10" y="744.60" width="588.00" height="4" fill="#808080"/>
<rect x="285.10" y="155.70" width="588.00" height="588.40" fill="none" stroke="#444" stroke-width="1.4"/>
<rect x="955" y="103" width="14" height="676" fill="#f0f0f0"/>
<rect x="955" y="432" width="14" height="15" fill="#c8c8c8"/>
<rect x="188" y="779" width="767" height="15" fill="#f0f0f0"/>
<rect x="563" y="779" width="15" height="14" fill="#c8c8c8"/>
<path d="M958 112 L961.5 108.5 L965 112" fill="none" stroke="#606060" stroke-width="1.6"/>
<path d="M958 770 L961.5 773.5 L965 770" fill="none" stroke="#606060" stroke-width="1.6"/>
<path d="M197 783 L193.5 786.5 L197 790" fill="none" stroke="#606060" stroke-width="1.6"/>
<path d="M944 783 L947.5 786.5 L944 790" fill="none" stroke="#606060" stroke-width="1.6"/>
</svg><div class="a" style="left:332px;top:173px;width:461px;height:520px;background:linear-gradient(90deg,#d9dfe4,#e2e7eb 6%,#dde3e8 12%,#dfe4e9 60%,#dae0e5)!important;border:1px solid #c9d1d7"></div>
<div class="t" style="left:493px;top:179px;font-size:13.5px;color:#3c3c3c">Configuration markcfg7</div>
<div class="a" style="left:759px;top:174px;width:28px;height:18px;background:#bdc1c5"></div>
<svg class="a" style="left:769px;top:179px" width="9" height="9" viewBox="0 0 9 9"><path d="M1 1 L8 8 M8 1 L1 8" stroke="#fff" stroke-width="1.2"/></svg>
<div class="a" style="left:338px;top:200px;width:449px;height:487px;background:#f0f0f0"></div>
<div class="a" style="left:345px;top:224px;width:436px;height:430px;border-style:solid;border-width:1px 2px 2px 1px;border-color:#fff #6a6a6a #6a6a6a #fff;box-shadow:inset -1px -1px 0 #a8a8a8"></div>
<div class="a" style="left:346px;top:209px;width:37px;height:15px;border-style:solid;border-width:1px 2px 0 1px;border-color:#fff #6a6a6a #fff #fff"></div>
<div class="a" style="left:383px;top:209px;width:63px;height:15px;border-style:solid;border-width:1px 2px 0 1px;border-color:#fff #6a6a6a #fff #fff"></div>
<div class="a" style="left:446px;top:209px;width:37px;height:15px;border-style:solid;border-width:1px 0 0 1px;border-color:#fff #6a6a6a #fff #fff"></div>
<div class="a" style="left:521px;top:209px;width:68px;height:15px;border-style:solid;border-width:1px 2px 0 1px;border-color:#fff #6a6a6a #fff #fff"></div>
<div class="a" style="left:483px;top:207px;width:38px;height:18px;background:#f0f0f0;border-style:solid;border-width:1px 2px 0 1px;border-color:#fff #6a6a6a #fff #fff"></div>
<div class="t" style="left:351px;top:212px;font-size:11px;color:#000;transform:scaleX(0.85);transform-origin:0 0;">Field</div>
<div class="t" style="left:389px;top:212px;font-size:11px;color:#000;transform:scaleX(0.85);transform-origin:0 0;">Laser Contro</div>
<div class="t" style="left:451px;top:212px;font-size:11px;color:#000;transform:scaleX(0.85);transform-origin:0 0;">Port</div>
<div class="t" style="left:488px;top:210px;font-size:11px;color:#000;transform:scaleX(0.85);transform-origin:0 0;">Other</div>
<div class="t" style="left:526px;top:212px;font-size:11px;color:#000;transform:scaleX(0.85);transform-origin:0 0;">Hardware info</div>
<div class="t" style="left:358px;top:243px;font-size:11px;color:#000;transform:scaleX(0.85);transform-origin:0 0;">Start Mark Delay</div>
<div class="a" style="left:487px;top:236px;width:41px;height:16px;background:#fff;border-style:solid;border-width:1px;border-color:#646464 #f4f4f4 #f4f4f4 #646464;box-shadow:inset 1px 1px 0 #a8a8a8;overflow:hidden"><div class="t" style="left:2px;top:2px;font-size:11px;color:#000;transform:scaleX(0.85);transform-origin:0 0;">0</div></div>
<div class="t" style="left:532px;top:243px;font-size:11px;color:#000;transform:scaleX(0.85);transform-origin:0 0;">ms</div>
<div class="t" style="left:358px;top:264px;font-size:11px;color:#000;transform:scaleX(0.85);transform-origin:0 0;">Finish Mark Delay</div>
<div class="a" style="left:487px;top:258px;width:41px;height:16px;background:#fff;border-style:solid;border-width:1px;border-color:#646464 #f4f4f4 #f4f4f4 #646464;box-shadow:inset 1px 1px 0 #a8a8a8;overflow:hidden"><div class="t" style="left:2px;top:2px;font-size:11px;color:#000;transform:scaleX(0.85);transform-origin:0 0;">0</div></div>
<div class="t" style="left:532px;top:263px;font-size:11px;color:#000;transform:scaleX(0.85);transform-origin:0 0;">ms</div>
<div class="t" style="left:358px;top:282px;font-size:11px;color:#000;transform:scaleX(0.85);transform-origin:0 0;">Min Power Delay</div>
<div class="a" style="left:487px;top:277px;width:41px;height:16px;background:#fff;border-style:solid;border-width:1px;border-color:#646464 #f4f4f4 #f4f4f4 #646464;box-shadow:inset 1px 1px 0 #a8a8a8;overflow:hidden"><div class="t" style="left:2px;top:2px;font-size:11px;color:#000;transform:scaleX(0.85);transform-origin:0 0;">0</div></div>
<div class="t" style="left:532px;top:281px;font-size:11px;color:#000;transform:scaleX(0.85);transform-origin:0 0;">ms</div>
<div class="t" style="left:358px;top:300px;font-size:11px;color:#000;transform:scaleX(0.85);transform-origin:0 0;">Max Power Delay</div>
<div class="a" style="left:487px;top:297px;width:41px;height:16px;background:#fff;border-style:solid;border-width:1px;border-color:#646464 #f4f4f4 #f4f4f4 #646464;box-shadow:inset 1px 1px 0 #a8a8a8;overflow:hidden"><div class="t" style="left:2px;top:2px;font-size:11px;color:#000;transform:scaleX(0.85);transform-origin:0 0;">0</div></div>
<div class="t" style="left:532px;top:300px;font-size:11px;color:#000;transform:scaleX(0.85);transform-origin:0 0;">ms</div>
<div class="t" style="left:358px;top:319px;font-size:11px;color:#000;transform:scaleX(0.85);transform-origin:0 0;">Max Freq Delay</div>
<div class="a" style="left:487px;top:316px;width:41px;height:16px;background:#fff;border-style:solid;border-width:1px;border-color:#646464 #f4f4f4 #f4f4f4 #646464;box-shadow:inset 1px 1px 0 #a8a8a8;overflow:hidden"><div class="t" style="left:2px;top:2px;font-size:11px;color:#000;transform:scaleX(0.85);transform-origin:0 0;">0</div></div>
<div class="t" style="left:532px;top:320px;font-size:11px;color:#000;transform:scaleX(0.85);transform-origin:0 0;">ms</div>
<div class="t" style="left:358px;top:339px;font-size:11px;color:#000;transform:scaleX(0.85);transform-origin:0 0;">Laser sleep time</div>
<div class="a" style="left:487px;top:336px;width:41px;height:16px;background:#fff;border-style:solid;border-width:1px;border-color:#646464 #f4f4f4 #f4f4f4 #646464;box-shadow:inset 1px 1px 0 #a8a8a8;overflow:hidden"><div class="t" style="left:2px;top:2px;font-size:11px;color:#000;transform:scaleX(0.85);transform-origin:0 0;">600</div></div>
<div class="t" style="left:532px;top:339px;font-size:11px;color:#000;transform:scaleX(0.85);transform-origin:0 0;">s</div>
<div class="t" style="left:358px;top:361px;font-size:11px;color:#000;transform:scaleX(0.85);transform-origin:0 0;">Max speed</div>
<div class="a" style="left:487px;top:357px;width:41px;height:16px;background:#fff;border-style:solid;border-width:1px;border-color:#646464 #f4f4f4 #f4f4f4 #646464;box-shadow:inset 1px 1px 0 #a8a8a8;overflow:hidden"><div class="t" style="left:2px;top:2px;font-size:11px;color:#000;transform:scaleX(0.85);transform-origin:0 0;">10000</div></div>
<div class="t" style="left:532px;top:361px;font-size:11px;color:#000;transform:scaleX(0.85);transform-origin:0 0;">MM/Second</div>
<div class="t" style="left:358px;top:381px;font-size:11px;color:#000;transform:scaleX(0.85);transform-origin:0 0;">Min speed</div>
<div class="a" style="left:487px;top:376px;width:41px;height:16px;background:#fff;border-style:solid;border-width:1px;border-color:#646464 #f4f4f4 #f4f4f4 #646464;box-shadow:inset 1px 1px 0 #a8a8a8;overflow:hidden"><div class="t" style="left:2px;top:2px;font-size:11px;color:#000;transform:scaleX(0.85);transform-origin:0 0;">1</div></div>
<div class="t" style="left:532px;top:381px;font-size:11px;color:#000;transform:scaleX(0.85);transform-origin:0 0;">MM/Secon</div>
<div class="t" style="left:358px;top:401px;font-size:11px;color:#000;transform:scaleX(0.85);transform-origin:0 0;">Curve scatter tolerance</div>
<div class="a" style="left:487px;top:397px;width:41px;height:16px;background:#fff;border-style:solid;border-width:1px;border-color:#646464 #f4f4f4 #f4f4f4 #646464;box-shadow:inset 1px 1px 0 #a8a8a8;overflow:hidden"><div class="t" style="left:2px;top:2px;font-size:11px;color:#000;transform:scaleX(0.85);transform-origin:0 0;">0.010000</div></div>
<div class="t" style="left:532px;top:402px;font-size:11px;color:#000;transform:scaleX(0.85);transform-origin:0 0;">MM</div>
<div class="t" style="left:588px;top:381px;font-size:11px;color:#000;transform:scaleX(0.85);transform-origin:0 0;">Total marking time</div>
<div class="a" style="left:679px;top:377px;width:60px;height:16px;background:#f0f0f0;border-style:solid;border-width:1px;border-color:#646464 #f4f4f4 #f4f4f4 #646464;box-shadow:inset 1px 1px 0 #a8a8a8;overflow:hidden"><div class="t" style="left:2px;top:2px;font-size:11px;color:#222;transform:scaleX(0.85);transform-origin:0 0;">33674</div></div>
<div class="t" style="left:746px;top:380px;font-size:11px;color:#000;transform:scaleX(0.85);transform-origin:0 0;">Seco</div>
<div class="t" style="left:588px;top:400px;font-size:11px;color:#000;transform:scaleX(0.85);transform-origin:0 0;">Total part num</div>
<div class="a" style="left:679px;top:399px;width:60px;height:16px;background:#fff;border-style:solid;border-width:1px;border-color:#646464 #f4f4f4 #f4f4f4 #646464;box-shadow:inset 1px 1px 0 #a8a8a8;overflow:hidden"><div class="t" style="left:2px;top:2px;font-size:11px;color:#000;transform:scaleX(0.85);transform-origin:0 0;">3891</div></div>
<div class="a" style="left:358px;top:421px;width:11px;height:11px;background:#fcfcfc;border:1px solid #959595;border-right-color:#d0d0d0;border-bottom-color:#d0d0d0"></div>
<div class="t" style="left:374px;top:421px;font-size:11px;color:#000;transform:scaleX(0.85);transform-origin:0 0;">Show start mark dialog</div>
<div class="a" style="left:358px;top:440px;width:11px;height:11px;background:#fcfcfc;border:1px solid #959595;border-right-color:#d0d0d0;border-bottom-color:#d0d0d0"></div>
<div class="t" style="left:374px;top:440px;font-size:11px;color:#000;transform:scaleX(0.85);transform-origin:0 0;">Enable execute mark start and stop command file</div>
<div class="a" style="left:358px;top:458px;width:11px;height:11px;background:#fcfcfc;border:1px solid #959595;border-right-color:#d0d0d0;border-bottom-color:#d0d0d0"></div><svg class="a" style="left:358px;top:458px" width="11" height="11" viewBox="0 0 11 11"><path d="M2.5 5.2 L4.5 7.5 L8.3 2.8" fill="none" stroke="#111" stroke-width="1.5"/></svg>
<div class="t" style="left:374px;top:458px;font-size:11px;color:#000;transform:scaleX(0.85);transform-origin:0 0;">Disable mark when reach total count</div>
<div class="a" style="left:358px;top:477px;width:11px;height:11px;background:#fcfcfc;border:1px solid #959595;border-right-color:#d0d0d0;border-bottom-color:#d0d0d0"></div><svg class="a" style="left:358px;top:477px" width="11" height="11" viewBox="0 0 11 11"><path d="M2.5 5.2 L4.5 7.5 L8.3 2.8" fill="none" stroke="#111" stroke-width="1.5"/></svg>
<div class="t" style="left:374px;top:477px;font-size:11px;color:#000;transform:scaleX(0.85);transform-origin:0 0;">Auto reset mark count</div>
<div class="a" style="left:358px;top:495px;width:11px;height:11px;background:#fcfcfc;border:1px solid #959595;border-right-color:#d0d0d0;border-bottom-color:#d0d0d0"></div>
<div class="t" style="left:374px;top:495px;font-size:11px;color:#000;transform:scaleX(0.85);transform-origin:0 0;">Enable power off with saving file automatic</div>
<div class="a" style="left:358px;top:514px;width:11px;height:11px;background:#fcfcfc;border:1px solid #959595;border-right-color:#d0d0d0;border-bottom-color:#d0d0d0"></div>
<div class="t" style="left:374px;top:514px;font-size:11px;color:#000;transform:scaleX(0.85);transform-origin:0 0;">Disable optimize when continue marking mode</div>
<div class="a" style="left:358px;top:532px;width:11px;height:11px;background:#fcfcfc;border:1px solid #959595;border-right-color:#d0d0d0;border-bottom-color:#d0d0d0"></div>
<div class="t" style="left:374px;top:532px;font-size:11px;color:#000;transform:scaleX(0.85);transform-origin:0 0;">Enable marking pause mode</div>
<div class="a" style="left:358px;top:550px;width:11px;height:11px;background:#fcfcfc;border:1px solid #959595;border-right-color:#d0d0d0;border-bottom-color:#d0d0d0"></div>
<div class="t" style="left:374px;top:550px;font-size:11px;color:#000;transform:scaleX(0.85);transform-origin:0 0;">Enable marking start signal lock</div>
<div class="a" style="left:358px;top:568px;width:11px;height:11px;background:#fcfcfc;border:1px solid #959595;border-right-color:#d0d0d0;border-bottom-color:#d0d0d0"></div>
<div class="t" style="left:374px;top:568px;font-size:11px;color:#000;transform:scaleX(0.85);transform-origin:0 0;">Enable use hard input signal</div>
<div class="a" style="left:358px;top:588px;width:11px;height:11px;background:#fcfcfc;border:1px solid #959595;border-right-color:#d0d0d0;border-bottom-color:#d0d0d0"></div>
<div class="t" style="left:374px;top:588px;font-size:11px;color:#000;transform:scaleX(0.85);transform-origin:0 0;">Enable analog current fpk</div>
<div class="a" style="left:542px;top:584px;width:52px;height:20px;background:#fff;border-style:solid;border-width:1px;border-color:#646464 #f4f4f4 #f4f4f4 #646464;box-shadow:inset 1px 1px 0 #a8a8a8;overflow:hidden"><div class="t" style="left:2px;top:2px;font-size:11px;color:#000;transform:scaleX(0.85);transform-origin:0 0;">100</div></div>
<div class="t" style="left:598px;top:591px;font-size:11px;color:#000;transform:scaleX(0.85);transform-origin:0 0;">us</div>
<div class="a" style="left:657px;top:235px;width:110px;height:37px;background:#f0f0f0;border-style:solid;border-width:1px;border-color:#fff #646464 #646464 #fff;box-shadow:inset -1px -1px 0 #a6a6a6"></div><div class="t" style="left:657px;top:248px;width:110px;text-align:center;font-size:11px;color:#000"><span style="display:inline-block;transform:scaleX(0.85)">Fly Mark</span></div>
<div class="a" style="left:657px;top:279px;width:110px;height:36px;background:#f0f0f0;border-style:solid;border-width:1px;border-color:#fff #646464 #646464 #fff;box-shadow:inset -1px -1px 0 #a6a6a6"></div><div class="t" style="left:657px;top:292px;width:110px;text-align:center;font-size:11px;color:#000"><span style="display:inline-block;transform:scaleX(0.85)">Red light pointer</span></div>
<div class="a" style="left:572px;top:659px;width:66px;height:20px;background:#f0f0f0;border-style:solid;border-width:1px;border-color:#fff #646464 #646464 #fff;box-shadow:inset -1px -1px 0 #a6a6a6"></div><div class="t" style="left:572px;top:664px;width:66px;text-align:center;font-size:11px;color:#000"><span style="display:inline-block;transform:scaleX(0.85)">OK</span></div>
<div class="a" style="left:643px;top:659px;width:66px;height:20px;background:#f0f0f0;border-style:solid;border-width:1px;border-color:#fff #646464 #646464 #fff;box-shadow:inset -1px -1px 0 #a6a6a6"></div><div class="t" style="left:643px;top:664px;width:66px;text-align:center;font-size:11px;color:#000"><span style="display:inline-block;transform:scaleX(0.85)">Отмена</span></div>
<div class="a" style="left:714px;top:659px;width:66px;height:20px;background:#f0f0f0;border-style:solid;border-width:1px;border-color:#fff #646464 #646464 #fff;box-shadow:inset -1px -1px 0 #a6a6a6"></div><div class="t" style="left:714px;top:664px;width:66px;text-align:center;font-size:11px;color:#a0a0a0"><span style="display:inline-block;transform:scaleX(0.85)">Применить</span></div><div class="a" style="left:973px;top:69px;width:2px;height:777px;border-left:1px solid #8c8c8c;border-right:1px solid #fff"></div>
<div class="hdr" style="left:978px;top:71px;width:131px"><span style="display:inline-block;transform:scaleX(.85);transform-origin:0 0">Marking parameter</span></div>
<svg class="a" style="left:1113px;top:74px" width="7" height="7" viewBox="0 0 7 7"><path d="M1 1 L6 6 M6 1 L1 6" stroke="#111" stroke-width="1.7"/></svg>
<div class="a" style="left:980px;top:102px;width:141px;height:124px;background:#fff;border-style:solid;border-width:2px 1px 1px 2px;border-color:#8a8a8a #fff #fff #8a8a8a;box-shadow:inset -1px -1px 0 #d8d8d8"></div>
<div class="a" style="left:982px;top:104px;width:67px;height:15px;background:#f0f0f0;border-style:solid;border-width:1px 2px 2px 1px;border-color:#fff #8a8a8a #8a8a8a #fff;overflow:hidden"></div>
<div class="a" style="left:1049px;top:104px;width:34px;height:15px;background:#f0f0f0;border-style:solid;border-width:1px 2px 2px 1px;border-color:#fff #8a8a8a #8a8a8a #fff;overflow:hidden"></div>
<div class="a" style="left:1083px;top:104px;width:24px;height:15px;background:#f0f0f0;border-style:solid;border-width:1px 2px 2px 1px;border-color:#fff #8a8a8a #8a8a8a #fff;overflow:hidden"></div>
<div class="t" style="left:988px;top:106px;font-size:11px;color:#000;transform:scaleX(0.9);transform-origin:0 0;">Pen No.</div>
<div class="t" style="left:1055px;top:106px;font-size:11px;color:#000;transform:scaleX(0.9);transform-origin:0 0;">Color</div>
<div class="t" style="left:1089px;top:106px;font-size:11px;color:#000;transform:scaleX(0.9);transform-origin:0 0;">On/</div>
<div class="a" style="left:1107px;top:104px;width:13px;height:108px;background:#f0f0f0"></div>
<div class="a" style="left:1107px;top:120px;width:13px;height:13px;background:#c8c8c8"></div>
<svg class="a" style="left:1107px;top:104px" width="13" height="108" viewBox="0 0 13 108"><path d="M3 10 L6.5 6.5 L10 10" fill="none" stroke="#555" stroke-width="1.5"/><path d="M3 98 L6.5 101.5 L10 98" fill="none" stroke="#555" stroke-width="1.5"/></svg>
<div class="a" style="left:982px;top:120px;width:125px;height:92px;overflow:hidden">
<div class="a" style="left:0;top:11px;width:125px;height:1px;background:#f0f0f0"></div>
<svg class="a" style="left:0;top:0px" width="11" height="11" viewBox="0 0 11 11"><path d="M5 0.3 V10.3 M0.3 5.3 H9.7 M1.8 1.8 L8.2 8.8 M8.2 1.8 L1.8 8.8" stroke="#ff1010" stroke-width="1"/></svg>
<div class="a" style="left:10px;top:1px;width:57px;height:11px;background:#3f9cf5"></div>
<div class="t" style="left:14px;top:1px;font-size:11px;color:#fff;transform:scaleX(.85);transform-origin:0 0">0 Default</div>
<div class="a" style="left:68px;top:1px;width:32px;height:11px;background:#000000;border:1px solid #111"></div>
<div class="t" style="left:106px;top:1px;font-size:11px;color:#111;transform:scaleX(.88);transform-origin:0 0">On</div>
<div class="a" style="left:0;top:23px;width:125px;height:1px;background:#f0f0f0"></div>
<svg class="a" style="left:0;top:12px" width="11" height="11" viewBox="0 0 11 11"><path d="M5 0.3 V10.3 M0.3 5.3 H9.7 M1.8 1.8 L8.2 8.8 M8.2 1.8 L1.8 8.8" stroke="#ff1010" stroke-width="1"/></svg>
<div class="t" style="left:14px;top:13px;font-size:11px;color:#111;transform:scaleX(.85);transform-origin:0 0">1 Default</div>
<div class="a" style="left:68px;top:13px;width:32px;height:11px;background:#0000ff;border:1px solid #111"></div>
<div class="t" style="left:106px;top:13px;font-size:11px;color:#111;transform:scaleX(.88);transform-origin:0 0">On</div>
<div class="a" style="left:0;top:36px;width:125px;height:1px;background:#f0f0f0"></div>
<svg class="a" style="left:0;top:25px" width="11" height="11" viewBox="0 0 11 11"><path d="M5 0.3 V10.3 M0.3 5.3 H9.7 M1.8 1.8 L8.2 8.8 M8.2 1.8 L1.8 8.8" stroke="#ff1010" stroke-width="1"/></svg>
<div class="t" style="left:14px;top:26px;font-size:11px;color:#111;transform:scaleX(.85);transform-origin:0 0">2 Default</div>
<div class="a" style="left:68px;top:26px;width:32px;height:11px;background:#ff0000;border:1px solid #111"></div>
<div class="t" style="left:106px;top:26px;font-size:11px;color:#111;transform:scaleX(.88);transform-origin:0 0">On</div>
<div class="a" style="left:0;top:48px;width:125px;height:1px;background:#f0f0f0"></div>
<svg class="a" style="left:0;top:37px" width="11" height="11" viewBox="0 0 11 11"><path d="M5 0.3 V10.3 M0.3 5.3 H9.7 M1.8 1.8 L8.2 8.8 M8.2 1.8 L1.8 8.8" stroke="#ff1010" stroke-width="1"/></svg>
<div class="t" style="left:14px;top:38px;font-size:11px;color:#111;transform:scaleX(.85);transform-origin:0 0">3 Default</div>
<div class="a" style="left:68px;top:38px;width:32px;height:11px;background:#00ff00;border:1px solid #111"></div>
<div class="t" style="left:106px;top:38px;font-size:11px;color:#111;transform:scaleX(.88);transform-origin:0 0">On</div>
<div class="a" style="left:0;top:60px;width:125px;height:1px;background:#f0f0f0"></div>
<svg class="a" style="left:0;top:49px" width="11" height="11" viewBox="0 0 11 11"><path d="M5 0.3 V10.3 M0.3 5.3 H9.7 M1.8 1.8 L8.2 8.8 M8.2 1.8 L1.8 8.8" stroke="#ff1010" stroke-width="1"/></svg>
<div class="t" style="left:14px;top:50px;font-size:11px;color:#111;transform:scaleX(.85);transform-origin:0 0">4 Default</div>
<div class="a" style="left:68px;top:50px;width:32px;height:11px;background:#ff00ff;border:1px solid #111"></div>
<div class="t" style="left:106px;top:50px;font-size:11px;color:#111;transform:scaleX(.88);transform-origin:0 0">On</div>
<div class="a" style="left:0;top:73px;width:125px;height:1px;background:#f0f0f0"></div>
<svg class="a" style="left:0;top:62px" width="11" height="11" viewBox="0 0 11 11"><path d="M5 0.3 V10.3 M0.3 5.3 H9.7 M1.8 1.8 L8.2 8.8 M8.2 1.8 L1.8 8.8" stroke="#ff1010" stroke-width="1"/></svg>
<div class="t" style="left:14px;top:63px;font-size:11px;color:#111;transform:scaleX(.85);transform-origin:0 0">5 Default</div>
<div class="a" style="left:68px;top:63px;width:32px;height:11px;background:#ffff00;border:1px solid #111"></div>
<div class="t" style="left:106px;top:63px;font-size:11px;color:#111;transform:scaleX(.88);transform-origin:0 0">On</div>
<div class="a" style="left:0;top:85px;width:125px;height:1px;background:#f0f0f0"></div>
<svg class="a" style="left:0;top:74px" width="11" height="11" viewBox="0 0 11 11"><path d="M5 0.3 V10.3 M0.3 5.3 H9.7 M1.8 1.8 L8.2 8.8 M8.2 1.8 L1.8 8.8" stroke="#ff1010" stroke-width="1"/></svg>
<div class="t" style="left:14px;top:75px;font-size:11px;color:#111;transform:scaleX(.85);transform-origin:0 0">6 Default</div>
<div class="a" style="left:68px;top:75px;width:32px;height:11px;background:#ff8080;border:1px solid #111"></div>
<div class="t" style="left:106px;top:75px;font-size:11px;color:#111;transform:scaleX(.88);transform-origin:0 0">On</div>
<div class="a" style="left:0;top:97px;width:125px;height:1px;background:#f0f0f0"></div>
<svg class="a" style="left:0;top:86px" width="11" height="11" viewBox="0 0 11 11"><path d="M5 0.3 V10.3 M0.3 5.3 H9.7 M1.8 1.8 L8.2 8.8 M8.2 1.8 L1.8 8.8" stroke="#ff1010" stroke-width="1"/></svg>
<div class="t" style="left:14px;top:87px;font-size:11px;color:#111;transform:scaleX(.85);transform-origin:0 0">7 Default</div>
<div class="a" style="left:68px;top:87px;width:32px;height:11px;background:#800000;border:1px solid #111"></div>
<div class="t" style="left:106px;top:87px;font-size:11px;color:#111;transform:scaleX(.88);transform-origin:0 0">On</div>
</div>
<div class="a" style="left:982px;top:212px;width:125px;height:13px;background:#f0f0f0"></div>
<div class="a" style="left:997px;top:212px;width:82px;height:13px;background:#c8c8c8"></div>
<svg class="a" style="left:982px;top:212px" width="125" height="13" viewBox="0 0 125 13"><path d="M9 3 L5.5 6.5 L9 10" fill="none" stroke="#555" stroke-width="1.5"/><path d="M115 3 L118.5 6.5 L115 10" fill="none" stroke="#555" stroke-width="1.5"/></svg>
<div class="a" style="left:1107px;top:212px;width:13px;height:13px;background:#f0f0f0"></div>
<div class="a" style="left:983px;top:230px;width:16px;height:18px;background:#000000"></div>
<div class="a" style="left:1000px;top:230px;width:16px;height:18px;background:#0000ff"></div>
<div class="a" style="left:1017px;top:230px;width:16px;height:18px;background:#ff0000"></div>
<div class="a" style="left:1034px;top:230px;width:16px;height:18px;background:#00ff00"></div>
<div class="a" style="left:1051px;top:230px;width:16px;height:18px;background:#ff00ff"></div>
<div class="a" style="left:1068px;top:230px;width:16px;height:18px;background:#ffff00"></div>
<div class="a" style="left:1085px;top:230px;width:16px;height:18px;background:#ff8080"></div>
<div class="a" style="left:1102px;top:230px;width:16px;height:18px;background:#700000"></div>
<div class="a" style="left:980px;top:251px;width:141px;height:272px;border:1px solid #d4d4d4;box-shadow:inset 1px 1px 0 #fff,1px 1px 0 #fff"></div>
<div class="a" style="left:985px;top:258px;width:11px;height:11px;background:#fcfcfc;border:1px solid #959595;border-right-color:#d0d0d0;border-bottom-color:#d0d0d0"></div><svg class="a" style="left:985px;top:258px" width="11" height="11" viewBox="0 0 11 11"><path d="M2.5 5.2 L4.5 7.5 L8.3 2.8" fill="none" stroke="#111" stroke-width="1.5"/></svg>
<div class="t" style="left:1000px;top:259px;font-size:11px;color:#000;transform:scaleX(0.88);transform-origin:0 0;">Use default param</div>
<div class="a" style="left:983px;top:273px;width:80px;height:17px;border-style:solid;border-width:1px;border-color:#d8d8d8 #fff #fff #d8d8d8;overflow:hidden"></div>
<div class="a" style="left:984px;top:273px;width:78px;height:17px;overflow:hidden"><div class="t" style="left:0px;top:4px;font-size:11px;color:#000;transform:scaleX(0.85);transform-origin:0 0;">Current pen</div></div>
<div class="a" style="left:1066px;top:273px;width:52px;height:17px;background:#f0f0f0;border-style:solid;border-width:2px 1px 1px 2px;border-color:#8a8a8a #fff #fff #8a8a8a"></div>
<div class="t" style="left:1069px;top:276px;font-size:11px;color:#000;transform:scaleX(0.85);transform-origin:0 0;">0</div>
<div class="a" style="left:983px;top:292px;width:80px;height:17px;border-style:solid;border-width:1px;border-color:#d8d8d8 #fff #fff #d8d8d8;overflow:hidden"></div>
<div class="a" style="left:984px;top:292px;width:78px;height:17px;overflow:hidden"><div class="t" style="left:0px;top:4px;font-size:11px;color:#000;transform:scaleX(0.85);transform-origin:0 0;">Loop Count</div></div>
<div class="a" style="left:1066px;top:292px;width:52px;height:17px;background:#f0f0f0;border-style:solid;border-width:2px 1px 1px 2px;border-color:#8a8a8a #fff #fff #8a8a8a"></div>
<div class="t" style="left:1069px;top:295px;font-size:11px;color:#a0a0a0;transform:scaleX(0.85);transform-origin:0 0;">1</div>
<div class="a" style="left:1103px;top:294px;width:14px;height:7px;border-style:solid;border-width:1px;border-color:#fff #8a8a8a #8a8a8a #fff"></div>
<div class="a" style="left:1103px;top:301px;width:14px;height:7px;border-style:solid;border-width:1px 1px 2px 1px;border-color:#fff #8a8a8a #6a6a6a #fff"></div>
<svg class="a" style="left:1103px;top:294px" width="14" height="14" viewBox="0 0 14 14"><path d="M5.5 5 L7.5 3 L9.5 5Z M5.5 9.5 L7.5 11.5 L9.5 9.5Z" fill="#a8a8a8"/></svg>
<div class="a" style="left:983px;top:312px;width:80px;height:17px;border-style:solid;border-width:1px;border-color:#d8d8d8 #fff #fff #d8d8d8;overflow:hidden"></div>
<div class="a" style="left:984px;top:312px;width:78px;height:17px;overflow:hidden"><div class="t" style="left:0px;top:4px;font-size:11px;color:#000;transform:scaleX(0.85);transform-origin:0 0;">Speed(MM/Second)</div></div>
<div class="a" style="left:1066px;top:312px;width:52px;height:17px;background:#f0f0f0;border-style:solid;border-width:2px 1px 1px 2px;border-color:#8a8a8a #fff #fff #8a8a8a"></div>
<div class="t" style="left:1069px;top:315px;font-size:11px;color:#a0a0a0;transform:scaleX(0.85);transform-origin:0 0;">500</div>
<div class="a" style="left:1103px;top:314px;width:14px;height:7px;border-style:solid;border-width:1px;border-color:#fff #8a8a8a #8a8a8a #fff"></div>
<div class="a" style="left:1103px;top:321px;width:14px;height:7px;border-style:solid;border-width:1px 1px 2px 1px;border-color:#fff #8a8a8a #6a6a6a #fff"></div>
<svg class="a" style="left:1103px;top:314px" width="14" height="14" viewBox="0 0 14 14"><path d="M5.5 5 L7.5 3 L9.5 5Z M5.5 9.5 L7.5 11.5 L9.5 9.5Z" fill="#a8a8a8"/></svg>
<div class="a" style="left:983px;top:332px;width:80px;height:17px;border-style:solid;border-width:1px;border-color:#d8d8d8 #fff #fff #d8d8d8;overflow:hidden"></div>
<div class="a" style="left:984px;top:332px;width:78px;height:17px;overflow:hidden"><div class="t" style="left:0px;top:4px;font-size:11px;color:#000;transform:scaleX(0.85);transform-origin:0 0;">Power(%)</div></div>
<div class="a" style="left:1066px;top:332px;width:52px;height:17px;background:#f0f0f0;border-style:solid;border-width:2px 1px 1px 2px;border-color:#8a8a8a #fff #fff #8a8a8a"></div>
<div class="t" style="left:1069px;top:335px;font-size:11px;color:#a0a0a0;transform:scaleX(0.85);transform-origin:0 0;">50</div>
<div class="a" style="left:1103px;top:334px;width:14px;height:7px;border-style:solid;border-width:1px;border-color:#fff #8a8a8a #8a8a8a #fff"></div>
<div class="a" style="left:1103px;top:341px;width:14px;height:7px;border-style:solid;border-width:1px 1px 2px 1px;border-color:#fff #8a8a8a #6a6a6a #fff"></div>
<svg class="a" style="left:1103px;top:334px" width="14" height="14" viewBox="0 0 14 14"><path d="M5.5 5 L7.5 3 L9.5 5Z M5.5 9.5 L7.5 11.5 L9.5 9.5Z" fill="#a8a8a8"/></svg>
<div class="a" style="left:983px;top:352px;width:80px;height:17px;border-style:solid;border-width:1px;border-color:#d8d8d8 #fff #fff #d8d8d8;overflow:hidden"></div>
<div class="a" style="left:984px;top:352px;width:78px;height:17px;overflow:hidden"><div class="t" style="left:0px;top:4px;font-size:11px;color:#000;transform:scaleX(0.85);transform-origin:0 0;">Frequency(KHz)</div></div>
<div class="a" style="left:1066px;top:352px;width:52px;height:17px;background:#f0f0f0;border-style:solid;border-width:2px 1px 1px 2px;border-color:#8a8a8a #fff #fff #8a8a8a"></div>
<div class="t" style="left:1069px;top:355px;font-size:11px;color:#a0a0a0;transform:scaleX(0.85);transform-origin:0 0;">20</div>
<div class="a" style="left:1103px;top:354px;width:14px;height:7px;border-style:solid;border-width:1px;border-color:#fff #8a8a8a #8a8a8a #fff"></div>
<div class="a" style="left:1103px;top:361px;width:14px;height:7px;border-style:solid;border-width:1px 1px 2px 1px;border-color:#fff #8a8a8a #6a6a6a #fff"></div>
<svg class="a" style="left:1103px;top:354px" width="14" height="14" viewBox="0 0 14 14"><path d="M5.5 5 L7.5 3 L9.5 5Z M5.5 9.5 L7.5 11.5 L9.5 9.5Z" fill="#a8a8a8"/></svg>
<div class="a" style="left:983px;top:392px;width:80px;height:17px;border-style:solid;border-width:1px;border-color:#d8d8d8 #fff #fff #d8d8d8;overflow:hidden"></div>
<div class="a" style="left:984px;top:392px;width:78px;height:17px;overflow:hidden"><div class="t" style="left:0px;top:4px;font-size:11px;color:#000;transform:scaleX(0.85);transform-origin:0 0;">Start TC(US)</div></div>
<div class="a" style="left:1066px;top:392px;width:52px;height:17px;background:#f0f0f0;border-style:solid;border-width:2px 1px 1px 2px;border-color:#8a8a8a #fff #fff #8a8a8a"></div>
<div class="t" style="left:1069px;top:395px;font-size:11px;color:#a0a0a0;transform:scaleX(0.85);transform-origin:0 0;">300</div>
<div class="a" style="left:1103px;top:394px;width:14px;height:7px;border-style:solid;border-width:1px;border-color:#fff #8a8a8a #8a8a8a #fff"></div>
<div class="a" style="left:1103px;top:401px;width:14px;height:7px;border-style:solid;border-width:1px 1px 2px 1px;border-color:#fff #8a8a8a #6a6a6a #fff"></div>
<svg class="a" style="left:1103px;top:394px" width="14" height="14" viewBox="0 0 14 14"><path d="M5.5 5 L7.5 3 L9.5 5Z M5.5 9.5 L7.5 11.5 L9.5 9.5Z" fill="#a8a8a8"/></svg>
<div class="a" style="left:983px;top:413px;width:80px;height:17px;border-style:solid;border-width:1px;border-color:#d8d8d8 #fff #fff #d8d8d8;overflow:hidden"></div>
<div class="a" style="left:984px;top:413px;width:78px;height:17px;overflow:hidden"><div class="t" style="left:0px;top:4px;font-size:11px;color:#000;transform:scaleX(0.85);transform-origin:0 0;">Laser Off TC(US)</div></div>
<div class="a" style="left:1066px;top:413px;width:52px;height:17px;background:#f0f0f0;border-style:solid;border-width:2px 1px 1px 2px;border-color:#8a8a8a #fff #fff #8a8a8a"></div>
<div class="t" style="left:1069px;top:416px;font-size:11px;color:#a0a0a0;transform:scaleX(0.85);transform-origin:0 0;">100</div>
<div class="a" style="left:1103px;top:415px;width:14px;height:7px;border-style:solid;border-width:1px;border-color:#fff #8a8a8a #8a8a8a #fff"></div>
<div class="a" style="left:1103px;top:422px;width:14px;height:7px;border-style:solid;border-width:1px 1px 2px 1px;border-color:#fff #8a8a8a #6a6a6a #fff"></div>
<svg class="a" style="left:1103px;top:415px" width="14" height="14" viewBox="0 0 14 14"><path d="M5.5 5 L7.5 3 L9.5 5Z M5.5 9.5 L7.5 11.5 L9.5 9.5Z" fill="#a8a8a8"/></svg>
<div class="a" style="left:983px;top:433px;width:80px;height:17px;border-style:solid;border-width:1px;border-color:#d8d8d8 #fff #fff #d8d8d8;overflow:hidden"></div>
<div class="a" style="left:984px;top:433px;width:78px;height:17px;overflow:hidden"><div class="t" style="left:0px;top:4px;font-size:11px;color:#000;transform:scaleX(0.85);transform-origin:0 0;">End TC(US)</div></div>
<div class="a" style="left:1066px;top:433px;width:52px;height:17px;background:#f0f0f0;border-style:solid;border-width:2px 1px 1px 2px;border-color:#8a8a8a #fff #fff #8a8a8a"></div>
<div class="t" style="left:1069px;top:436px;font-size:11px;color:#a0a0a0;transform:scaleX(0.85);transform-origin:0 0;">300</div>
<div class="a" style="left:1103px;top:435px;width:14px;height:7px;border-style:solid;border-width:1px;border-color:#fff #8a8a8a #8a8a8a #fff"></div>
<div class="a" style="left:1103px;top:442px;width:14px;height:7px;border-style:solid;border-width:1px 1px 2px 1px;border-color:#fff #8a8a8a #6a6a6a #fff"></div>
<svg class="a" style="left:1103px;top:435px" width="14" height="14" viewBox="0 0 14 14"><path d="M5.5 5 L7.5 3 L9.5 5Z M5.5 9.5 L7.5 11.5 L9.5 9.5Z" fill="#a8a8a8"/></svg>
<div class="a" style="left:983px;top:458px;width:80px;height:17px;border-style:solid;border-width:1px;border-color:#d8d8d8 #fff #fff #d8d8d8;overflow:hidden"></div>
<div class="a" style="left:984px;top:458px;width:78px;height:17px;overflow:hidden"><div class="t" style="left:0px;top:4px;font-size:11px;color:#000;transform:scaleX(0.85);transform-origin:0 0;">Polygon TC(US)</div></div>
<div class="a" style="left:1066px;top:458px;width:52px;height:17px;background:#f0f0f0;border-style:solid;border-width:2px 1px 1px 2px;border-color:#8a8a8a #fff #fff #8a8a8a"></div>
<div class="t" style="left:1069px;top:461px;font-size:11px;color:#a0a0a0;transform:scaleX(0.85);transform-origin:0 0;">100</div>
<div class="a" style="left:1103px;top:460px;width:14px;height:7px;border-style:solid;border-width:1px;border-color:#fff #8a8a8a #8a8a8a #fff"></div>
<div class="a" style="left:1103px;top:467px;width:14px;height:7px;border-style:solid;border-width:1px 1px 2px 1px;border-color:#fff #8a8a8a #6a6a6a #fff"></div>
<svg class="a" style="left:1103px;top:460px" width="14" height="14" viewBox="0 0 14 14"><path d="M5.5 5 L7.5 3 L9.5 5Z M5.5 9.5 L7.5 11.5 L9.5 9.5Z" fill="#a8a8a8"/></svg>
<div class="a" style="left:1024px;top:500px;width:28px;height:19px;background:#f0f0f0;border-style:solid;border-width:1px 2px 2px 1px;border-color:#fff #7a7a7a #7a7a7a #fff"></div>
<svg class="a" style="left:1026px;top:503px" width="24" height="12" viewBox="0 0 24 12"><g fill="none" stroke="#aaa" stroke-width=".9"><circle cx="5" cy="6" r="4"/><circle cx="10" cy="6" r="4"/><circle cx="15" cy="6" r="4"/><circle cx="19" cy="6" r="4"/></g></svg>
<div class="a" style="left:1057px;top:500px;width:62px;height:19px;background:#f0f0f0;border-style:solid;border-width:1px 2px 2px 1px;border-color:#fff #7a7a7a #7a7a7a #fff"></div>
<div class="t" style="left:1064px;top:503px;font-size:11px;color:#a0a0a0;transform:scaleX(0.9);transform-origin:0 0;">Advance...</div>
<div class="a" style="left:980px;top:528px;width:54px;height:17px;background:#f0f0f0;border-style:solid;border-width:1px 2px 2px 1px;border-color:#fff #7a7a7a #7a7a7a #fff"></div>
<div class="t" style="left:982px;top:531px;font-size:11px;color:#a0a0a0;transform:scaleX(0.85);transform-origin:0 0;">Param name</div>
<div class="a" style="left:1035px;top:528px;width:86px;height:17px;background:#f0f0f0;border-style:solid;border-width:1px;border-color:#a0a0a0 #fff #fff #a0a0a0"></div>
<div class="t" style="left:1037px;top:531px;font-size:11px;color:#000;transform:scaleX(0.85);transform-origin:0 0;">Default</div>
<div class="a" style="left:980px;top:547px;width:142px;height:22px;background:#f0f0f0;border-style:solid;border-width:1px 2px 2px 1px;border-color:#fff #7a7a7a #7a7a7a #fff"></div>
<div class="t" style="left:980px;top:552px;width:142px;text-align:center;font-size:11px;color:#a0a0a0"><span style="display:inline-block;transform:scaleX(.83)">Select param from library</span></div>
<div class="a" style="left:980px;top:570px;width:142px;height:22px;background:#f0f0f0;border-style:solid;border-width:1px 2px 2px 1px;border-color:#fff #7a7a7a #7a7a7a #fff"></div>
<div class="t" style="left:980px;top:575px;width:142px;text-align:center;font-size:11px;color:#a0a0a0"><span style="display:inline-block;transform:scaleX(.88)">Apply to default</span></div><div class="a" style="left:186px;top:795px;width:787px;height:1px;background:#fff"></div>
<div class="a" style="left:188px;top:802px;width:50px;height:37px;background:#f0f0f0;border-style:solid;border-width:1px;border-color:#fff #646464 #646464 #fff;box-shadow:inset -1px -1px 0 #a6a6a6"></div><div class="t" style="left:188px;top:816px;width:50px;text-align:center;font-size:11px;color:#000"><span style="display:inline-block;transform:scaleX(0.84)">Red(F1)</span></div>
<div class="a" style="left:241px;top:802px;width:50px;height:37px;background:#f0f0f0;border-style:solid;border-width:1px;border-color:#fff #646464 #646464 #fff;box-shadow:inset -1px -1px 0 #a6a6a6"></div><div class="t" style="left:241px;top:816px;width:50px;text-align:center;font-size:11px;color:#000"><span style="display:inline-block;transform:scaleX(0.84)">Mark(F2)</span></div>
<div class="a" style="left:295px;top:805px;width:11px;height:11px;background:#fcfcfc;border:1px solid #959595;border-right-color:#d0d0d0;border-bottom-color:#d0d0d0"></div>
<div class="t" style="left:312px;top:807px;font-size:11px;color:#000;transform:scaleX(0.83);transform-origin:0 0;"><u>[C]</u>Continuous</div>
<div class="a" style="left:295px;top:826px;width:11px;height:11px;background:#fcfcfc;border:1px solid #959595;border-right-color:#d0d0d0;border-bottom-color:#d0d0d0"></div>
<div class="t" style="left:312px;top:827px;font-size:11px;color:#000;transform:scaleX(0.83);transform-origin:0 0;"><u>[S]</u>Mark Select</div>
<div class="t" style="left:381px;top:807px;font-size:11px;color:#000;transform:scaleX(0.85);transform-origin:0 0;">Part</div>
<div class="a" style="left:381px;top:825px;width:29px;height:14px;overflow:hidden"><div class="t" style="left:0px;top:1px;font-size:11px;color:#000;transform:scaleX(0.85);transform-origin:0 0;">Total num</div></div>
<div class="a" style="left:417px;top:802px;width:37px;height:16px;background:#fff;border-style:solid;border-width:1px;border-color:#646464 #f4f4f4 #f4f4f4 #646464;box-shadow:inset 1px 1px 0 #a8a8a8"></div>
<div class="t" style="left:420px;top:805px;font-size:11px;color:#000;transform:scaleX(0.85);transform-origin:0 0;">0</div>
<div class="a" style="left:417px;top:821px;width:37px;height:16px;background:#fff;border-style:solid;border-width:1px;border-color:#646464 #f4f4f4 #f4f4f4 #646464;box-shadow:inset 1px 1px 0 #a8a8a8"></div>
<div class="t" style="left:420px;top:824px;font-size:11px;color:#000;transform:scaleX(0.85);transform-origin:0 0;">0</div>
<div class="a" style="left:456px;top:801px;width:18px;height:21px;background:#f0f0f0;border-style:solid;border-width:1px;border-color:#fff #646464 #646464 #fff;box-shadow:inset -1px -1px 0 #a6a6a6"></div><div class="t" style="left:456px;top:806px;width:18px;text-align:center;font-size:11px;color:#000"><span style="display:inline-block;transform:scaleX(0.84)">R</span></div>
<div class="a" style="left:475px;top:823px;width:49px;height:20px;background:#f0f0f0;border-style:solid;border-width:1px;border-color:#fff #646464 #646464 #fff;box-shadow:inset -1px -1px 0 #a6a6a6,0 0 0 1px #555"></div><div class="t" style="left:475px;top:828px;width:49px;text-align:center;font-size:11px;color:#000"><span style="display:inline-block;transform:scaleX(0.8)">Param(F3)</span></div>
<div class="a" style="left:527px;top:801px;width:65px;height:17px;background:#f0f0f0;border-style:solid;border-width:1px;border-color:#c8c8c8 #fff #fff #c8c8c8"></div>
<div class="t" style="left:529px;top:806px;font-size:11px;color:#000;transform:scaleX(0.85);transform-origin:0 0;">00:00:00</div>
<div class="a" style="left:527px;top:824px;width:65px;height:17px;background:#f0f0f0;border-style:solid;border-width:1px;border-color:#c8c8c8 #fff #fff #c8c8c8"></div>
<div class="t" style="left:529px;top:828px;font-size:11px;color:#000;transform:scaleX(0.85);transform-origin:0 0;">00:00:00</div>
<div class="a" style="left:596px;top:806px;width:11px;height:11px;background:#fcfcfc;border:1px solid #959595;border-right-color:#d0d0d0;border-bottom-color:#d0d0d0"></div><svg class="a" style="left:596px;top:806px" width="11" height="11" viewBox="0 0 11 11"><path d="M2.5 5.2 L4.5 7.5 L8.3 2.8" fill="none" stroke="#111" stroke-width="1.5"/></svg>
<div class="t" style="left:612px;top:806px;font-size:11px;color:#000;transform:scaleX(0.85);transform-origin:0 0;">Show contour</div>
<div class="a" style="left:596px;top:827px;width:11px;height:11px;background:#fcfcfc;border:1px solid #959595;border-right-color:#d0d0d0;border-bottom-color:#d0d0d0"></div>
<div class="t" style="left:612px;top:828px;font-size:11px;color:#000;transform:scaleX(0.85);transform-origin:0 0;">Continue mode</div>
<div class="a" style="left:0;top:846px;width:1125px;height:19px;background:#f0f0f0;border-top:1px solid #a8a8a8"></div>
<div class="t" style="left:2px;top:852px;font-size:10.5px;color:#222">No object selected</div>
<div class="a" style="left:879px;top:850px;width:92px;height:14px;border-style:solid;border-width:1px;border-color:#c8c8c8 #fff #fff #c8c8c8;overflow:hidden"><div class="t" style="left:4px;top:1px;font-size:10.5px;color:#222;transform:scaleX(.92);transform-origin:0 0">51.227,-55.857</div></div>
<div class="a" style="left:974px;top:850px;width:48px;height:14px;border-style:solid;border-width:1px;border-color:#c8c8c8 #fff #fff #c8c8c8;overflow:hidden"><div class="t" style="left:1px;top:1px;font-size:10.5px;color:#222;transform:scaleX(.92);transform-origin:0 0">Grid:Off</div></div>
<div class="a" style="left:1025px;top:850px;width:48px;height:14px;border-style:solid;border-width:1px;border-color:#c8c8c8 #fff #fff #c8c8c8;overflow:hidden"><div class="t" style="left:1px;top:1px;font-size:10.5px;color:#222;transform:scaleX(.92);transform-origin:0 0">Guildline:Off</div></div>
<div class="a" style="left:1076px;top:850px;width:50px;height:14px;border-style:solid;border-width:1px;border-color:#c8c8c8 #fff #fff #c8c8c8;overflow:hidden"><div class="t" style="left:1px;top:1px;font-size:10.5px;color:#222;transform:scaleX(.92);transform-origin:0 0">Object:Off</div></div><div class="a" style="left:0;top:865px;width:1125px;height:35px;overflow:hidden;background:linear-gradient(180deg,#3a7b97,#2b6a87)">
<div class="a" style="left:-40px;top:6px;width:400px;height:14px;border-radius:50%;background:#4f8fab;opacity:.35;filter:blur(4px)"></div>
<div class="a" style="left:300px;top:18px;width:500px;height:12px;border-radius:50%;background:#5797b2;opacity:.3;filter:blur(4px)"></div>
<div class="a" style="left:700px;top:4px;width:450px;height:14px;border-radius:50%;background:#4f8fab;opacity:.3;filter:blur(4px)"></div>
</div>
<svg class="a" style="left:10px;top:871px" width="23" height="22" viewBox="0 0 23 22"><path d="M0 3 L9.5 1.6 V10.3 H0Z M10.8 1.4 L23 0 V10.3 H10.8Z M0 11.6 H9.5 V20.4 L0 19Z M10.8 11.6 H23 V22 L10.8 20.6Z" fill="#fff"/></svg>
<div class="a" style="left:46px;top:866px;width:72px;height:34px;background:rgba(255,255,255,.16);border:1px solid rgba(255,255,255,.22)"></div><svg class="a" style="left:51px;top:870px" width="27" height="27" viewBox="0 0 27 27"><defs><radialGradient id="tbg" cx=".5" cy=".4" r=".6"><stop offset="0" stop-color="#3a7ad8"/><stop offset="1" stop-color="#0e2a6a"/></radialGradient></defs><circle cx="13.5" cy="13.5" r="12.5" fill="url(#tbg)"/><path d="M2 12 Q3 3 12 1.5 Q20 1 24 6 Q18 4 13 7 Q9 9 8 13Z" fill="#7ab8f0"/><path d="M4 12 L15 9 L23 13 L21 22 L8 24Z" fill="#f4f4f4" stroke="#999" stroke-width=".6"/><path d="M4 12 L13 18 L23 13" fill="none" stroke="#aaa" stroke-width=".8"/><path d="M17 22 Q24 20 25 14 Q26 22 18 25Z" fill="#1a4aa0"/></svg><div class="t" style="left:82px;top:877px;font-size:11px;color:#fff;transform:scaleX(.9);transform-origin:0 0">Вход...</div>
<svg class="a" style="left:130px;top:869px" width="27" height="28" viewBox="0 0 27 28"><path d="M13.5 1 C22 1 26 5 26 13 C26 20 22 24 14 24 L9 27.5 L9 23.5 C3 22 1 18 1 12.5 C1 5 5 1 13.5 1Z" fill="#fff"/><path d="M13.5 3 C20.5 3 24 6 24 13 C24 19 20.5 22 13.5 22 L10.5 24.5 V21.5 C5 20.5 3 17.5 3 12.5 C3 6 6.5 3 13.5 3Z" fill="#7b5ccd"/><path d="M9 8 Q8 9 9 12 Q11 16 15 18 Q17 19 18 17 L16 15 L14.5 16 Q12 14 11 11.5 L12 10Z" fill="#fff"/><path d="M14 7 Q18 7.5 19 11.5 M14 9 Q16.5 9.5 17 11.5" fill="none" stroke="#fff" stroke-width=".9"/></svg>
<svg class="a" style="left:178px;top:869px" width="26" height="26" viewBox="0 0 26 26"><path d="M13 1 A12 12 0 1 1 6 22.7 L1 25 L3 19.5 A12 12 0 0 1 13 1Z" fill="#fff"/><circle cx="13" cy="12.8" r="10" fill="#3ebe4f"/><path d="M8.5 7.5 Q7.5 8.5 8.5 11.5 Q10.5 15.5 14.5 17.5 Q17 18.5 18 16.5 L16 14.5 L14.5 15.5 Q12 14 11 11.5 L12 10Z" fill="#fff"/></svg>
<svg class="a" style="left:224px;top:868px" width="28" height="28" viewBox="0 0 28 28"><defs><radialGradient id="glb" cx=".45" cy=".35" r=".7"><stop offset="0" stop-color="#6a8af0"/><stop offset="1" stop-color="#23308a"/></radialGradient><linearGradient id="fox" x1="0" y1="0" x2="0" y2="1"><stop offset="0" stop-color="#ffc000"/><stop offset=".5" stop-color="#ff7a10"/><stop offset="1" stop-color="#d83a10"/></linearGradient></defs>
<circle cx="15" cy="12.5" r="9.5" fill="url(#glb)"/>
<path d="M4.5 7 Q0.5 14 3 20 Q7 27 15 27 Q23.5 26.5 26 19 Q27.5 12 23.5 7 Q25 15 20 19 Q14 22.5 9.5 19 Q5.5 15.5 7.5 10 Q8 6 11.5 4 Q7 4 4.5 7Z" fill="url(#fox)"/>
<path d="M10 3.5 Q17 -0.5 23 4.5 Q25.5 7.5 26 11 Q22.5 6.5 18 6.8 Q20 9 19 11.5 Q16 8 13 8.5 Q11 6.5 10 3.5Z" fill="#ff9a10"/></svg>
<div class="a" style="left:264px;top:866px;width:72px;height:34px;background:rgba(255,255,255,.16);border:1px solid rgba(255,255,255,.22)"></div><svg class="a" style="left:268px;top:874px" width="27" height="18" viewBox="0 0 27 18"><path d="M3 6 L20 1 L26 5 L9 11Z" fill="#e8e8e8" stroke="#777" stroke-width=".6"/><path d="M3 6 L9 11 V16 L3 11Z" fill="#999"/><path d="M9 11 L26 5 V10 L9 16Z" fill="#bbb" stroke="#777" stroke-width=".5"/><rect x="12" y="12" width="2" height="2" fill="#3c3"/></svg><div class="t" style="left:300px;top:877px;font-size:11px;color:#fff;transform:scaleX(.9);transform-origin:0 0">Нов...</div>
<div class="a" style="left:337px;top:866px;width:73px;height:34px;background:rgba(255,255,255,.16);border:1px solid rgba(255,255,255,.22)"></div><svg class="a" style="left:343px;top:869px" width="22" height="28" viewBox="0 0 22 28"><path d="M2 3 L12 1 L20 4 V25 L10 27 L2 24Z" fill="#e8c66a"/><path d="M2 3 L10 6 V27 L2 24Z" fill="#f6dc8a"/><path d="M10 6 L20 4 V25 L10 27Z" fill="#d8b454"/><rect x="14" y="20" width="4" height="3" fill="#ccc"/></svg><div class="t" style="left:373px;top:877px;font-size:11px;color:#fff;transform:scaleX(.9);transform-origin:0 0">!!! 3D...</div>
<div class="a" style="left:413px;top:866px;width:72px;height:34px;background:rgba(255,255,255,.16);border:1px solid rgba(255,255,255,.22)"></div><svg class="a" style="left:419px;top:870px" width="24" height="24" viewBox="-12 -12 24 24">
<path d="M0 -11 A11 11 0 0 1 9.53 5.5 L4.33 2.5 A5 5 0 0 0 0 -5Z" fill="#fcc934"/>
<path d="M0 -11 A11 11 0 0 0 -9.53 5.5 L-4.33 2.5 L0 -5 H9.53 A11 11 0 0 0 0 -11Z" fill="#db4437"/>
<path d="M-9.53 5.5 A11 11 0 0 0 9.53 5.5 L4.33 2.5 L0 5 Z M-9.53 5.5 L-4.33 2.5 L0 5 L-4 11Z" fill="#0f9d58"/>
<path d="M9.53 -5.5 L4.33 2.5 L-2 11 A11 11 0 0 0 11 0 A11 11 0 0 0 9.53 -5.5Z" fill="#fcc934"/>
<circle r="5.2" fill="#fff"/><circle r="4" fill="#4285f4"/></svg><div class="t" style="left:449px;top:877px;font-size:11px;color:#fff;transform:scaleX(.9);transform-origin:0 0">167 F...</div>
<div class="a" style="left:486px;top:866px;width:73px;height:34px;background:rgba(255,255,255,.16);border:1px solid rgba(255,255,255,.22)"></div><svg class="a" style="left:492px;top:870px" width="24" height="24" viewBox="-12 -12 24 24">
<path d="M0 -11 A11 11 0 0 1 9.53 5.5 L4.33 2.5 A5 5 0 0 0 0 -5Z" fill="#fcc934"/>
<path d="M0 -11 A11 11 0 0 0 -9.53 5.5 L-4.33 2.5 L0 -5 H9.53 A11 11 0 0 0 0 -11Z" fill="#db4437"/>
<path d="M-9.53 5.5 A11 11 0 0 0 9.53 5.5 L4.33 2.5 L0 5 Z M-9.53 5.5 L-4.33 2.5 L0 5 L-4 11Z" fill="#0f9d58"/>
<path d="M9.53 -5.5 L4.33 2.5 L-2 11 A11 11 0 0 0 11 0 A11 11 0 0 0 9.53 -5.5Z" fill="#fcc934"/>
<circle r="5.2" fill="#fff"/><circle r="4" fill="#4285f4"/></svg><div class="t" style="left:522px;top:877px;font-size:11px;color:#fff;transform:scaleX(.9);transform-origin:0 0">Част...</div>
<div class="a" style="left:560px;top:866px;width:72px;height:34px;background:rgba(255,255,255,.16);border:1px solid rgba(255,255,255,.22)"></div><svg class="a" style="left:566px;top:870px" width="24" height="24" viewBox="-12 -12 24 24">
<path d="M0 -11 A11 11 0 0 1 9.53 5.5 L4.33 2.5 A5 5 0 0 0 0 -5Z" fill="#fcc934"/>
<path d="M0 -11 A11 11 0 0 0 -9.53 5.5 L-4.33 2.5 L0 -5 H9.53 A11 11 0 0 0 0 -11Z" fill="#db4437"/>
<path d="M-9.53 5.5 A11 11 0 0 0 9.53 5.5 L4.33 2.5 L0 5 Z M-9.53 5.5 L-4.33 2.5 L0 5 L-4 11Z" fill="#0f9d58"/>
<path d="M9.53 -5.5 L4.33 2.5 L-2 11 A11 11 0 0 0 11 0 A11 11 0 0 0 9.53 -5.5Z" fill="#fcc934"/>
<circle r="5.2" fill="#fff"/><circle r="4" fill="#4285f4"/></svg><div class="t" style="left:596px;top:877px;font-size:11px;color:#fff;transform:scaleX(.9);transform-origin:0 0">smar...</div>
<div class="a" style="left:633px;top:866px;width:73px;height:34px;background:rgba(255,255,255,.16);border:1px solid rgba(255,255,255,.22)"></div><svg class="a" style="left:639px;top:870px" width="24" height="24" viewBox="-12 -12 24 24">
<path d="M0 -11 A11 11 0 0 1 9.53 5.5 L4.33 2.5 A5 5 0 0 0 0 -5Z" fill="#fcc934"/>
<path d="M0 -11 A11 11 0 0 0 -9.53 5.5 L-4.33 2.5 L0 -5 H9.53 A11 11 0 0 0 0 -11Z" fill="#db4437"/>
<path d="M-9.53 5.5 A11 11 0 0 0 9.53 5.5 L4.33 2.5 L0 5 Z M-9.53 5.5 L-4.33 2.5 L0 5 L-4 11Z" fill="#0f9d58"/>
<path d="M9.53 -5.5 L4.33 2.5 L-2 11 A11 11 0 0 0 11 0 A11 11 0 0 0 9.53 -5.5Z" fill="#fcc934"/>
<circle r="5.2" fill="#fff"/><circle r="4" fill="#4285f4"/></svg><div class="t" style="left:669px;top:877px;font-size:11px;color:#fff;transform:scaleX(.9);transform-origin:0 0">Каю...</div>
<div class="a" style="left:709px;top:866px;width:71px;height:34px;background:rgba(255,255,255,.16);border:1px solid rgba(255,255,255,.22)"></div><svg class="a" style="left:713px;top:869px" width="28" height="28" viewBox="0 0 28 28"><path d="M2 5 L14 1 L26 5 V20 L14 24 L2 20Z" fill="#c9252c"/><path d="M14 9 L26 5 V20 L14 24Z" fill="#9a1a20"/><text x="7.5" y="15" font-size="10" font-weight="bold" fill="#fff" font-family="Liberation Sans" text-anchor="middle">S</text><text x="19.5" y="15" font-size="10" font-weight="bold" fill="#fff" font-family="Liberation Sans" text-anchor="middle">W</text><text x="14" y="27.5" font-size="8.5" font-weight="bold" fill="#fff" stroke="#111" stroke-width="1.6" paint-order="stroke" font-family="Liberation Sans" text-anchor="middle">2017</text></svg><div class="t" style="left:745px;top:877px;font-size:11px;color:#fff;transform:scaleX(.9);transform-origin:0 0">SOLI...</div>
<div class="a" style="left:784px;top:866px;width:71px;height:34px;background:rgba(255,255,255,.16);border:1px solid rgba(255,255,255,.22)"></div>
<div class="a" style="left:785px;top:867px;width:55px;height:33px;background:linear-gradient(90deg,#b8b030,#ecec30 60%,#f2f020)"></div>
<svg class="a" style="left:788px;top:869px" width="28" height="28" viewBox="0 0 28 28"><path d="M2 6 L24 2 L25 7 L3 11Z" fill="#222"/><path d="M4 6 L7 10 M9 5 L12 9 M14 4 L17 8 M19 3 L22 7" stroke="#fff" stroke-width="1.5"/><rect x="3" y="11" width="22" height="15" fill="#fff" stroke="#333" stroke-width=".8"/><text x="5" y="23" font-size="10" font-weight="bold" fill="#e07010" font-family="Liberation Sans">3</text><text x="12" y="23" font-size="10" font-weight="bold" fill="#2060c0" font-family="Liberation Sans">2</text><rect x="19" y="14" width="3" height="10" fill="#3070d0"/></svg>
<div class="t" style="left:820px;top:877px;font-size:11px;color:#fff;transform:scaleX(.9);transform-origin:0 0">Vspo...</div>
<div class="a" style="left:859px;top:866px;width:71px;height:34px;background:rgba(255,255,255,.28);border:1px solid rgba(255,255,255,.22)"></div><svg class="a" style="left:863px;top:868px" width="28" height="30" viewBox="0 0 28 30"><rect x="1" y="1" width="26" height="28" fill="#fff"/><path d="M1 6 H27 M1 12 H27 M1 18 H27 M7 1 V29 M14 1 V29 M21 1 V29" stroke="#dde" stroke-width=".5"/><text x="14" y="20" font-size="21" font-weight="bold" fill="#d01818" font-family="Liberation Sans" text-anchor="middle" stroke="#600" stroke-width=".5">2</text><text x="14" y="28" font-size="6.5" font-weight="bold" fill="#1a2a80" font-family="Liberation Sans" text-anchor="middle">EZCAD</text></svg><div class="t" style="left:895px;top:877px;font-size:11px;color:#fff;transform:scaleX(.9);transform-origin:0 0">EzCa...</div>
<svg class="a" style="left:938px;top:880px" width="10" height="7" viewBox="0 0 10 7"><path d="M1 6 L5 1.8 L9 6Z" fill="#fff"/></svg>
<svg class="a" style="left:957px;top:875px" width="18" height="16" viewBox="0 0 18 16"><path d="M4.5 0.5 L0.5 3.5 L4.5 6 L8.5 3.5Z M13.5 0.5 L9.5 3.5 L13.5 6 L17.5 3.5Z M4.5 6 L0.5 8.5 L4.5 11 L8.5 8.5Z M13.5 6 L9.5 8.5 L13.5 11 L17.5 8.5Z M4.5 12 L9 14.8 L13.5 12 L9 9.2Z" fill="#fff"/></svg>
<svg class="a" style="left:978px;top:874px" width="16" height="17" viewBox="0 0 16 17"><rect x="4.5" y="3.5" width="11" height="8" fill="none" stroke="#fff" stroke-width="1.2"/><path d="M10 12 V15 M6.5 15.5 H13.5" stroke="#fff" stroke-width="1.2"/><circle cx="3" cy="3" r="2.3" fill="none" stroke="#fff"/><path d="M3 5.5 V15" stroke="#fff"/></svg>
<svg class="a" style="left:998px;top:875px" width="16" height="15" viewBox="0 0 16 15"><path d="M1 5 H4 L8 1.5 V13.5 L4 10 H1Z" fill="#fff"/><path d="M10 5 Q11.5 7.5 10 10 M12 3 Q15 7.5 12 12" fill="none" stroke="#fff" stroke-width="1.1"/></svg>
<div class="t" style="left:1026px;top:878px;font-size:12px;color:#fff;transform:scaleX(.8);transform-origin:0 0">РУС</div>
<div class="t" style="left:1074px;top:870px;font-size:10.5px;color:#fff;transform:scaleX(.88);transform-origin:0 0">17:54</div>
<div class="t" style="left:1060px;top:885px;font-size:10.5px;color:#fff;transform:scaleX(.9);transform-origin:0 0">04.12.2017</div></body></html>
